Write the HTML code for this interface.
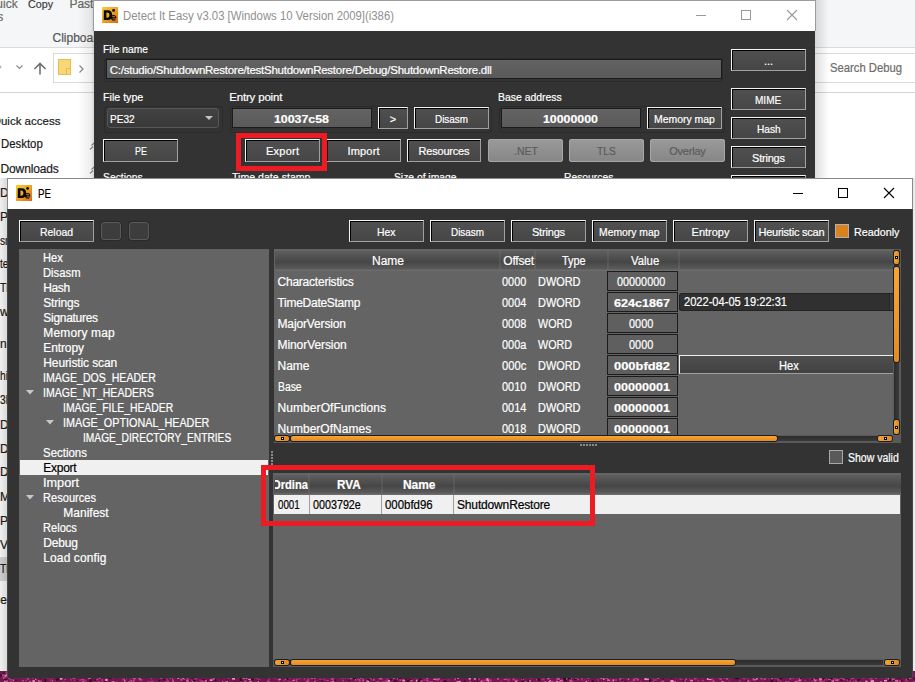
<!DOCTYPE html>
<html><head><meta charset="utf-8"><style>
html,body{margin:0;padding:0;width:915px;height:682px;overflow:hidden;background:#fff;}
body{position:relative;font-family:"Liberation Sans",sans-serif;}
body div{position:absolute;}
.t{white-space:nowrap;-webkit-text-stroke:0.2px;}
.btn{border-top:1px solid #f4f4f4;border-left:1px solid #f4f4f4;border-right:1px solid #a0a0a0;border-bottom:1px solid #a0a0a0;background:linear-gradient(#505050,#464646);box-shadow:inset 1px 1px 0 #000;}
.sbtn{background:linear-gradient(90deg,#f4a232,#e08a22);border-radius:2px;box-shadow:0 0 0 1px #1a1f26;}
.sbh{background:linear-gradient(#f7a535,#e38b20);border-radius:2px;box-shadow:0 0 0 1px #1a1f26;}
</style></head><body>
<div style="left:0px;top:0px;width:915px;height:47px;background:#f5f6f7;"></div>
<div style="left:0px;top:47px;width:915px;height:1px;background:#dadbdc;"></div>
<div style="left:0px;top:92px;width:915px;height:1px;background:#d5d5d5;"></div>
<div style="left:53px;top:53px;width:60px;height:30px;border:1px solid #d9d9d9;box-sizing:border-box;background:#fff;"></div>
<div style="left:810px;top:53px;width:120px;height:30px;border:1px solid #d9d9d9;box-sizing:border-box;background:#fff;"></div>
<div class="t" style="left:-13.00px;top:-4.16px;font-size:12px;line-height:16px;color:#6b6b6b;">Quick</div>
<div class="t" style="left:28.00px;top:-3.98px;font-size:11.5px;line-height:16px;color:#3a3a3a;transform:scaleX(0.9313);transform-origin:0 0;">Copy</div>
<div class="t" style="left:69.40px;top:-4.16px;font-size:12px;line-height:16px;color:#666;">Paste</div>
<div class="t" style="left:-34.00px;top:9.34px;font-size:12px;line-height:16px;color:#6b6b6b;">access</div>
<div class="t" style="left:52.50px;top:29.54px;font-size:12px;line-height:16px;color:#555;">Clipboard</div>
<svg style="position:absolute;left:0;top:55px" width="93" height="30"><path d="M-3 8 L1 12 L-3 16" stroke="#b0b0b0" stroke-width="1.2" fill="none"/><path d="M16.5 10.5 L19.5 13.5 L22.5 10.5" stroke="#8a8a8a" stroke-width="1.2" fill="none"/><path d="M40 19.5 V8.5 M34.5 14 L40 8.5 L45.5 14" stroke="#707070" stroke-width="1.6" fill="none"/><rect x="58.5" y="4.5" width="12" height="15" fill="#f8d876" stroke="#e6bc55" stroke-width="1"/><rect x="66.5" y="13.5" width="4" height="6" fill="#f8d876" stroke="#e6bc55" stroke-width="1"/><path d="M79.5 10.5 L83 14 L79.5 17.5" stroke="#8a8a8a" stroke-width="1.2" fill="none"/></svg>
<div class="t" style="left:830.30px;top:59.54px;font-size:12px;line-height:16px;color:#6d6d6d;transform:scaleX(0.9386);transform-origin:0 0;">Search Debug</div>
<div class="t" style="left:-8.00px;top:112.62px;font-size:11.5px;line-height:16px;color:#1a1a1a;">Quick access</div>
<div class="t" style="left:0.60px;top:136.24px;font-size:12px;line-height:16px;color:#1a1a1a;transform:scaleX(0.9473);transform-origin:0 0;">Desktop</div>
<div class="t" style="left:0.60px;top:160.54px;font-size:12px;line-height:16px;color:#1a1a1a;letter-spacing:-0.158px;">Downloads</div>
<svg style="position:absolute;left:86px;top:140px" width="8" height="40"><path d="M4 9.5 L7 6.5 M5.5 5.5 L8 3 L9 7" stroke="#8a9099" stroke-width="1.1" fill="none"/><path d="M4 33.5 L7 30.5 M5.5 29.5 L8 27 L9 31" stroke="#8a9099" stroke-width="1.1" fill="none"/></svg>
<div style="left:0px;top:557px;width:7px;height:24px;background:#d9d9d9;"></div>
<div class="t" style="left:0.00px;top:185.44px;font-size:12px;line-height:16px;color:#1a1a1a;">D</div>
<div class="t" style="left:0.00px;top:209.14px;font-size:12px;line-height:16px;color:#1a1a1a;">P</div>
<div class="t" style="left:0.00px;top:232.64px;font-size:12px;line-height:16px;color:#1a1a1a;transform:scaleX(.85);transform-origin:0 0;">sr</div>
<div class="t" style="left:0.00px;top:255.74px;font-size:12px;line-height:16px;color:#1a1a1a;transform:scaleX(.85);transform-origin:0 0;">te</div>
<div class="t" style="left:0.00px;top:279.84px;font-size:12px;line-height:16px;color:#1a1a1a;transform:scaleX(.85);transform-origin:0 0;">Tl</div>
<div class="t" style="left:0.00px;top:304.14px;font-size:12px;line-height:16px;color:#1a1a1a;">w</div>
<div class="t" style="left:0.00px;top:336.44px;font-size:12px;line-height:16px;color:#1a1a1a;">n</div>
<div class="t" style="left:0.00px;top:368.24px;font-size:12px;line-height:16px;color:#1a1a1a;transform:scaleX(.85);transform-origin:0 0;">hi</div>
<div class="t" style="left:0.00px;top:392.44px;font-size:12px;line-height:16px;color:#1a1a1a;transform:scaleX(.85);transform-origin:0 0;">3l</div>
<div class="t" style="left:0.00px;top:416.64px;font-size:12px;line-height:16px;color:#1a1a1a;">D</div>
<div class="t" style="left:0.00px;top:440.84px;font-size:12px;line-height:16px;color:#1a1a1a;">D</div>
<div class="t" style="left:0.00px;top:464.34px;font-size:12px;line-height:16px;color:#1a1a1a;">D</div>
<div class="t" style="left:0.00px;top:488.54px;font-size:12px;line-height:16px;color:#1a1a1a;">M</div>
<div class="t" style="left:0.00px;top:512.64px;font-size:12px;line-height:16px;color:#1a1a1a;">P</div>
<div class="t" style="left:0.00px;top:536.84px;font-size:12px;line-height:16px;color:#1a1a1a;">V</div>
<div class="t" style="left:0.00px;top:561.04px;font-size:12px;line-height:16px;color:#1a1a1a;transform:scaleX(.85);transform-origin:0 0;">Tl</div>
<div class="t" style="left:-2.50px;top:592.44px;font-size:12px;line-height:16px;color:#1a1a1a;"><span style="color:#1a6fd0">l</span>e</div>
<div style="left:815px;top:0px;width:14px;height:200px;background:linear-gradient(90deg,rgba(0,0,0,.13),rgba(0,0,0,0));"></div>
<div style="left:78px;top:0px;width:16px;height:200px;background:linear-gradient(90deg,rgba(0,0,0,0),rgba(0,0,0,.07) 80%,rgba(0,0,0,.16));"></div>
<div style="left:0px;top:178px;width:7px;height:493px;background:linear-gradient(90deg,rgba(0,0,0,.06),rgba(0,0,0,.15));"></div>
<div style="left:912px;top:178px;width:3px;height:493px;background:linear-gradient(90deg,rgba(0,0,0,.14),rgba(0,0,0,.05));"></div>
<svg style="position:absolute;left:0;top:671px" width="915" height="11"><rect width="915" height="11" fill="#6e1a4e"/><rect x="296.3" y="0.8" width="1" height="1" fill="#30101f"/><rect x="86.1" y="6.0" width="3" height="1" fill="#c8408f"/><rect x="78.6" y="4.0" width="1.5" height="1" fill="#30101f"/><rect x="388.4" y="8.9" width="1" height="1" fill="#c8408f"/><rect x="528.0" y="3.8" width="1.5" height="1" fill="#30101f"/><rect x="785.5" y="2.5" width="1.5" height="2" fill="#e060b0"/><rect x="522.4" y="5.7" width="1.5" height="1" fill="#a02a70"/><rect x="340.7" y="5.6" width="1" height="2" fill="#c8408f"/><rect x="566.4" y="5.0" width="3" height="1.5" fill="#f090c8"/><rect x="426.0" y="10.1" width="2" height="1.5" fill="#a02a70"/><rect x="726.9" y="7.4" width="1.5" height="1" fill="#7a1a55"/><rect x="480.6" y="9.5" width="2.5" height="1.5" fill="#e060b0"/><rect x="108.0" y="4.0" width="2" height="1" fill="#1a0612"/><rect x="385.9" y="10.5" width="1" height="2" fill="#f090c8"/><rect x="311.2" y="3.2" width="2.5" height="2" fill="#1a0612"/><rect x="62.9" y="0.1" width="2" height="1.5" fill="#e060b0"/><rect x="55.5" y="7.4" width="3" height="2" fill="#1a0612"/><rect x="260.4" y="3.6" width="2" height="1" fill="#1a0612"/><rect x="325.2" y="6.3" width="2.5" height="1" fill="#a02a70"/><rect x="702.9" y="0.6" width="1.5" height="1.5" fill="#d04a98"/><rect x="838.9" y="5.0" width="1.5" height="1.5" fill="#d04a98"/><rect x="502.7" y="9.6" width="2.5" height="2" fill="#7a1a55"/><rect x="646.4" y="10.8" width="2.5" height="1" fill="#b03078"/><rect x="75.9" y="0.8" width="1.5" height="1" fill="#1a0612"/><rect x="760.5" y="1.2" width="2" height="1" fill="#b03078"/><rect x="383.3" y="3.4" width="3" height="1.5" fill="#b03078"/><rect x="631.8" y="5.2" width="3" height="2" fill="#c8408f"/><rect x="417.8" y="9.5" width="3" height="1.5" fill="#d04a98"/><rect x="365.1" y="0.2" width="2.5" height="1" fill="#a02a70"/><rect x="61.6" y="1.5" width="1.5" height="1" fill="#f090c8"/><rect x="549.7" y="0.2" width="3" height="1" fill="#30101f"/><rect x="92.8" y="3.4" width="1" height="1" fill="#a02a70"/><rect x="561.9" y="0.8" width="2" height="1.5" fill="#f090c8"/><rect x="433.8" y="0.4" width="2.5" height="1.5" fill="#1a0612"/><rect x="442.7" y="0.0" width="1" height="2" fill="#f090c8"/><rect x="677.4" y="4.7" width="1.5" height="2" fill="#c8408f"/><rect x="187.8" y="10.4" width="2" height="1" fill="#30101f"/><rect x="836.4" y="8.1" width="2" height="2" fill="#e060b0"/><rect x="637.0" y="2.1" width="2" height="1" fill="#f090c8"/><rect x="706.3" y="5.4" width="3" height="1.5" fill="#a02a70"/><rect x="561.1" y="8.5" width="1.5" height="1" fill="#d04a98"/><rect x="677.0" y="1.7" width="3" height="1.5" fill="#f090c8"/><rect x="668.9" y="10.9" width="2" height="1.5" fill="#7a1a55"/><rect x="177.2" y="6.3" width="2" height="1.5" fill="#f090c8"/><rect x="873.8" y="3.4" width="1.5" height="1" fill="#a02a70"/><rect x="430.1" y="3.1" width="2.5" height="2" fill="#c8408f"/><rect x="438.7" y="6.8" width="1" height="2" fill="#e060b0"/><rect x="832.4" y="8.4" width="1.5" height="1.5" fill="#b03078"/><rect x="397.0" y="6.6" width="1" height="2" fill="#d04a98"/><rect x="423.8" y="7.9" width="1" height="2" fill="#b03078"/><rect x="155.6" y="0.5" width="1.5" height="2" fill="#1a0612"/><rect x="737.9" y="0.8" width="3" height="1.5" fill="#f090c8"/><rect x="142.7" y="5.6" width="1" height="1" fill="#e060b0"/><rect x="481.8" y="10.2" width="2.5" height="1" fill="#a02a70"/><rect x="25.6" y="1.6" width="3" height="1" fill="#f090c8"/><rect x="237.3" y="4.0" width="1.5" height="1" fill="#f090c8"/><rect x="821.4" y="6.9" width="3" height="1.5" fill="#30101f"/><rect x="119.6" y="0.8" width="3" height="1" fill="#1a0612"/><rect x="710.5" y="6.3" width="1.5" height="1" fill="#b03078"/><rect x="433.2" y="7.7" width="3" height="1" fill="#f090c8"/><rect x="624.3" y="5.4" width="2.5" height="1" fill="#30101f"/><rect x="52.0" y="1.3" width="1" height="1" fill="#30101f"/><rect x="413.7" y="-0.7" width="1" height="1.5" fill="#f090c8"/><rect x="560.5" y="5.1" width="3" height="1" fill="#7a1a55"/><rect x="413.9" y="5.4" width="2.5" height="2" fill="#a02a70"/><rect x="639.8" y="9.5" width="2" height="2" fill="#a02a70"/><rect x="768.6" y="0.6" width="1" height="1.5" fill="#1a0612"/><rect x="289.1" y="7.1" width="2.5" height="1" fill="#a02a70"/><rect x="612.6" y="8.4" width="1.5" height="2" fill="#f090c8"/><rect x="130.8" y="9.6" width="2.5" height="1" fill="#e060b0"/><rect x="364.4" y="4.8" width="1.5" height="1" fill="#d04a98"/><rect x="909.6" y="3.8" width="2.5" height="1" fill="#f090c8"/><rect x="291.5" y="7.7" width="1" height="1.5" fill="#30101f"/><rect x="419.7" y="7.4" width="2.5" height="1.5" fill="#30101f"/><rect x="570.9" y="5.1" width="1" height="1" fill="#a02a70"/><rect x="889.1" y="0.3" width="2" height="1.5" fill="#c8408f"/><rect x="828.9" y="1.2" width="1.5" height="1.5" fill="#7a1a55"/><rect x="371.4" y="5.4" width="3" height="2" fill="#1a0612"/><rect x="640.9" y="0.1" width="1" height="2" fill="#b03078"/><rect x="389.2" y="-0.1" width="1" height="2" fill="#e060b0"/><rect x="733.5" y="0.0" width="1.5" height="1" fill="#7a1a55"/><rect x="789.4" y="4.4" width="2" height="2" fill="#d04a98"/><rect x="847.9" y="2.2" width="1.5" height="1" fill="#30101f"/><rect x="649.2" y="10.3" width="1.5" height="1.5" fill="#c8408f"/><rect x="165.7" y="10.2" width="2" height="2" fill="#a02a70"/><rect x="265.3" y="5.0" width="1.5" height="1.5" fill="#f090c8"/><rect x="735.4" y="10.9" width="1" height="1" fill="#c8408f"/><rect x="670.8" y="5.6" width="1.5" height="2" fill="#1a0612"/><rect x="224.8" y="4.4" width="2.5" height="2" fill="#1a0612"/><rect x="499.5" y="9.7" width="3" height="1.5" fill="#a02a70"/><rect x="898.9" y="3.1" width="1.5" height="1.5" fill="#f090c8"/><rect x="898.4" y="9.0" width="1" height="1" fill="#7a1a55"/><rect x="394.1" y="-0.3" width="2.5" height="2" fill="#7a1a55"/><rect x="547.9" y="7.3" width="1" height="1.5" fill="#b03078"/><rect x="144.1" y="4.3" width="2" height="1.5" fill="#f090c8"/><rect x="890.0" y="5.6" width="1.5" height="1" fill="#7a1a55"/><rect x="199.3" y="1.2" width="2" height="1.5" fill="#e060b0"/><rect x="434.3" y="5.0" width="1.5" height="1" fill="#30101f"/><rect x="710.3" y="0.1" width="1" height="1" fill="#d04a98"/><rect x="536.9" y="3.7" width="2" height="1.5" fill="#a02a70"/><rect x="77.3" y="10.5" width="1.5" height="2" fill="#d04a98"/><rect x="699.3" y="7.6" width="2.5" height="1" fill="#7a1a55"/><rect x="662.6" y="6.7" width="1" height="2" fill="#30101f"/><rect x="574.0" y="7.8" width="3" height="1" fill="#30101f"/><rect x="688.9" y="5.8" width="1" height="2" fill="#a02a70"/><rect x="77.9" y="-0.5" width="2" height="1" fill="#d04a98"/><rect x="764.8" y="5.7" width="1" height="2" fill="#30101f"/><rect x="622.8" y="4.9" width="1" height="1.5" fill="#e060b0"/><rect x="684.7" y="5.0" width="3" height="1" fill="#30101f"/><rect x="60.4" y="7.8" width="2" height="1" fill="#7a1a55"/><rect x="214.8" y="8.1" width="1.5" height="2" fill="#1a0612"/><rect x="452.0" y="3.6" width="2.5" height="2" fill="#7a1a55"/><rect x="701.8" y="6.4" width="1.5" height="1" fill="#b03078"/><rect x="303.6" y="6.8" width="2" height="2" fill="#b03078"/><rect x="11.4" y="-0.3" width="2" height="2" fill="#e060b0"/><rect x="633.3" y="7.1" width="2" height="2" fill="#30101f"/><rect x="261.3" y="4.6" width="1" height="2" fill="#a02a70"/><rect x="285.2" y="0.0" width="2.5" height="1" fill="#7a1a55"/><rect x="420.0" y="8.8" width="2.5" height="1.5" fill="#d04a98"/><rect x="192.0" y="10.3" width="1.5" height="1" fill="#e060b0"/><rect x="129.7" y="5.3" width="2" height="1" fill="#30101f"/><rect x="255.8" y="0.4" width="2" height="1" fill="#1a0612"/><rect x="821.4" y="4.8" width="1" height="1" fill="#c8408f"/><rect x="869.2" y="7.2" width="2.5" height="1.5" fill="#b03078"/><rect x="380.8" y="3.5" width="1" height="1.5" fill="#c8408f"/><rect x="297.0" y="3.1" width="2.5" height="1" fill="#a02a70"/><rect x="652.4" y="9.8" width="2" height="1.5" fill="#f090c8"/><rect x="59.5" y="3.7" width="3" height="1" fill="#f090c8"/><rect x="846.8" y="8.1" width="1" height="1.5" fill="#e060b0"/><rect x="47.2" y="6.9" width="1.5" height="1" fill="#7a1a55"/><rect x="399.2" y="2.8" width="2" height="1.5" fill="#c8408f"/><rect x="742.9" y="6.6" width="3" height="2" fill="#a02a70"/><rect x="658.4" y="-0.4" width="2.5" height="1.5" fill="#b03078"/><rect x="589.7" y="2.4" width="1" height="2" fill="#b03078"/><rect x="156.2" y="4.0" width="2" height="1.5" fill="#7a1a55"/><rect x="676.2" y="10.7" width="2" height="1.5" fill="#a02a70"/><rect x="275.3" y="5.7" width="2.5" height="1" fill="#b03078"/><rect x="588.5" y="-0.1" width="3" height="1.5" fill="#30101f"/><rect x="201.3" y="9.9" width="2.5" height="1.5" fill="#b03078"/><rect x="501.2" y="1.9" width="1.5" height="1.5" fill="#30101f"/><rect x="83.4" y="1.9" width="2" height="2" fill="#a02a70"/><rect x="811.8" y="8.0" width="2.5" height="1.5" fill="#d04a98"/><rect x="682.4" y="1.5" width="2" height="1.5" fill="#c8408f"/><rect x="455.8" y="5.9" width="2" height="1" fill="#30101f"/><rect x="484.2" y="8.5" width="1.5" height="1" fill="#7a1a55"/><rect x="820.6" y="3.6" width="2.5" height="1.5" fill="#7a1a55"/><rect x="776.5" y="9.5" width="1" height="1" fill="#c8408f"/><rect x="389.1" y="8.2" width="2.5" height="2" fill="#1a0612"/><rect x="0.2" y="3.7" width="3" height="1.5" fill="#1a0612"/><rect x="227.3" y="0.3" width="1.5" height="1" fill="#30101f"/><rect x="889.3" y="0.3" width="2.5" height="1" fill="#30101f"/><rect x="710.8" y="-1.0" width="1.5" height="1" fill="#c8408f"/><rect x="590.6" y="2.6" width="1.5" height="2" fill="#7a1a55"/><rect x="483.4" y="4.2" width="1" height="1" fill="#e060b0"/><rect x="274.8" y="10.3" width="1.5" height="1.5" fill="#7a1a55"/><rect x="204.6" y="6.2" width="1" height="2" fill="#7a1a55"/><rect x="911.7" y="2.3" width="2" height="2" fill="#a02a70"/><rect x="434.9" y="1.8" width="1.5" height="1" fill="#d04a98"/><rect x="644.8" y="2.7" width="1" height="1" fill="#1a0612"/><rect x="809.6" y="6.8" width="1" height="1.5" fill="#a02a70"/><rect x="610.6" y="10.1" width="1.5" height="1.5" fill="#c8408f"/><rect x="636.7" y="7.6" width="2" height="2" fill="#d04a98"/><rect x="181.2" y="8.6" width="3" height="1" fill="#a02a70"/><rect x="453.6" y="1.4" width="1.5" height="1" fill="#1a0612"/><rect x="202.6" y="8.1" width="2" height="1" fill="#1a0612"/><rect x="558.2" y="9.8" width="2.5" height="1.5" fill="#c8408f"/><rect x="868.1" y="0.8" width="2.5" height="1" fill="#a02a70"/><rect x="21.6" y="6.2" width="2.5" height="1" fill="#c8408f"/><rect x="168.5" y="4.4" width="2" height="2" fill="#e060b0"/><rect x="912.7" y="10.2" width="2" height="1" fill="#b03078"/><rect x="597.0" y="5.3" width="2.5" height="1" fill="#7a1a55"/><rect x="608.0" y="3.5" width="2" height="1.5" fill="#1a0612"/><rect x="154.9" y="-1.0" width="2" height="1" fill="#f090c8"/><rect x="384.5" y="9.6" width="3" height="1" fill="#d04a98"/><rect x="326.3" y="8.9" width="2.5" height="1" fill="#c8408f"/><rect x="645.3" y="1.3" width="3" height="1.5" fill="#a02a70"/><rect x="295.8" y="7.8" width="2.5" height="1" fill="#d04a98"/><rect x="226.9" y="6.5" width="2.5" height="1" fill="#d04a98"/><rect x="31.9" y="-0.2" width="1" height="1.5" fill="#a02a70"/><rect x="683.8" y="9.8" width="2" height="1.5" fill="#7a1a55"/><rect x="306.5" y="10.4" width="1" height="1.5" fill="#f090c8"/><rect x="845.7" y="2.6" width="3" height="2" fill="#e060b0"/><rect x="22.2" y="1.8" width="2.5" height="2" fill="#1a0612"/><rect x="872.8" y="3.6" width="2" height="1.5" fill="#1a0612"/><rect x="121.4" y="5.0" width="1" height="2" fill="#7a1a55"/><rect x="752.8" y="8.3" width="3" height="1" fill="#f090c8"/><rect x="788.0" y="4.5" width="3" height="1" fill="#30101f"/><rect x="180.5" y="8.0" width="1.5" height="1.5" fill="#e060b0"/><rect x="594.3" y="4.8" width="3" height="1.5" fill="#b03078"/><rect x="896.9" y="9.6" width="1" height="1.5" fill="#e060b0"/><rect x="190.6" y="4.1" width="2.5" height="1" fill="#a02a70"/><rect x="121.6" y="4.5" width="1.5" height="2" fill="#30101f"/><rect x="775.0" y="7.0" width="1" height="1.5" fill="#7a1a55"/><rect x="255.6" y="2.2" width="2" height="2" fill="#7a1a55"/><rect x="182.3" y="2.0" width="1.5" height="1" fill="#b03078"/><rect x="257.4" y="9.9" width="1.5" height="1.5" fill="#e060b0"/><rect x="362.4" y="10.9" width="3" height="2" fill="#a02a70"/><rect x="594.4" y="0.2" width="2.5" height="1" fill="#e060b0"/><rect x="4.1" y="9.6" width="1.5" height="1.5" fill="#f090c8"/><rect x="36.9" y="2.5" width="1" height="1" fill="#a02a70"/><rect x="549.5" y="8.9" width="1.5" height="1" fill="#f090c8"/><rect x="469.1" y="1.1" width="3" height="1.5" fill="#c8408f"/><rect x="96.8" y="6.2" width="3" height="1.5" fill="#a02a70"/><rect x="34.3" y="3.1" width="1" height="1" fill="#7a1a55"/><rect x="35.0" y="7.8" width="1.5" height="1" fill="#f090c8"/><rect x="374.2" y="3.5" width="3" height="1.5" fill="#e060b0"/><rect x="186.1" y="8.5" width="3" height="1.5" fill="#e060b0"/><rect x="373.5" y="8.6" width="3" height="1" fill="#30101f"/><rect x="83.4" y="1.0" width="2" height="1.5" fill="#7a1a55"/><rect x="611.0" y="4.0" width="1" height="1.5" fill="#f090c8"/><rect x="378.9" y="-0.8" width="2" height="2" fill="#a02a70"/><rect x="357.5" y="3.9" width="1" height="1.5" fill="#b03078"/><rect x="387.7" y="8.8" width="2.5" height="2" fill="#f090c8"/><rect x="421.7" y="1.0" width="1" height="1" fill="#30101f"/><rect x="130.4" y="8.7" width="2.5" height="1" fill="#f090c8"/><rect x="674.6" y="1.1" width="2" height="1.5" fill="#b03078"/><rect x="476.9" y="10.1" width="1" height="1.5" fill="#1a0612"/><rect x="689.5" y="8.5" width="1.5" height="1.5" fill="#b03078"/><rect x="766.1" y="-0.5" width="2.5" height="1.5" fill="#c8408f"/><rect x="556.0" y="6.6" width="1" height="2" fill="#b03078"/><rect x="585.9" y="9.3" width="3" height="1.5" fill="#a02a70"/><rect x="758.7" y="1.2" width="1.5" height="1" fill="#d04a98"/><rect x="858.8" y="0.9" width="2" height="1" fill="#b03078"/><rect x="226.1" y="7.7" width="1.5" height="1" fill="#30101f"/><rect x="770.9" y="7.1" width="2" height="1" fill="#d04a98"/><rect x="548.6" y="5.6" width="2" height="2" fill="#d04a98"/><rect x="282.0" y="2.0" width="2.5" height="2" fill="#f090c8"/><rect x="408.8" y="4.3" width="1" height="1" fill="#1a0612"/><rect x="425.7" y="4.4" width="3" height="1.5" fill="#b03078"/><rect x="741.6" y="3.8" width="1" height="1" fill="#f090c8"/><rect x="394.0" y="0.1" width="2.5" height="2" fill="#30101f"/><rect x="601.2" y="-0.5" width="1.5" height="1" fill="#f090c8"/><rect x="711.5" y="5.1" width="1" height="2" fill="#d04a98"/><rect x="597.3" y="8.4" width="1" height="1" fill="#e060b0"/><rect x="177.2" y="10.8" width="2.5" height="1.5" fill="#b03078"/><rect x="627.8" y="7.7" width="1.5" height="1" fill="#f090c8"/><rect x="558.6" y="2.0" width="2" height="2" fill="#7a1a55"/><rect x="828.1" y="4.5" width="2" height="2" fill="#1a0612"/><rect x="190.6" y="2.2" width="3" height="1" fill="#f090c8"/><rect x="340.6" y="1.4" width="2.5" height="1" fill="#7a1a55"/><rect x="621.9" y="9.7" width="1.5" height="1.5" fill="#e060b0"/><rect x="703.0" y="-0.4" width="2" height="1.5" fill="#30101f"/><rect x="477.1" y="7.3" width="1" height="1.5" fill="#30101f"/><rect x="576.2" y="3.7" width="2" height="1.5" fill="#d04a98"/><rect x="906.3" y="5.9" width="2" height="1.5" fill="#e060b0"/><rect x="404.7" y="1.1" width="1" height="1.5" fill="#30101f"/><rect x="232.1" y="6.7" width="3" height="2" fill="#f090c8"/><rect x="670.7" y="8.0" width="1.5" height="1" fill="#7a1a55"/><rect x="563.7" y="4.2" width="3" height="1.5" fill="#c8408f"/><rect x="120.8" y="1.7" width="1" height="1" fill="#c8408f"/><rect x="2.4" y="3.3" width="1" height="2" fill="#f090c8"/><rect x="488.7" y="4.0" width="2" height="2" fill="#b03078"/><rect x="186.8" y="6.5" width="2.5" height="1" fill="#b03078"/><rect x="12.9" y="8.6" width="1.5" height="1.5" fill="#e060b0"/><rect x="58.3" y="0.7" width="2" height="1.5" fill="#7a1a55"/><rect x="884.9" y="-0.3" width="3" height="1.5" fill="#1a0612"/><rect x="550.7" y="5.2" width="2.5" height="1" fill="#b03078"/><rect x="826.7" y="-0.5" width="3" height="1" fill="#d04a98"/><rect x="169.9" y="0.9" width="1" height="1" fill="#30101f"/><rect x="601.0" y="1.4" width="2.5" height="1" fill="#30101f"/><rect x="556.4" y="5.1" width="2.5" height="2" fill="#b03078"/><rect x="465.3" y="-0.2" width="1" height="2" fill="#1a0612"/><rect x="654.6" y="-0.9" width="2.5" height="2" fill="#1a0612"/><rect x="73.6" y="6.9" width="1.5" height="1" fill="#e060b0"/><rect x="239.2" y="6.7" width="1" height="1.5" fill="#7a1a55"/><rect x="651.2" y="2.2" width="3" height="2" fill="#d04a98"/><rect x="627.4" y="10.0" width="2" height="1.5" fill="#a02a70"/><rect x="78.2" y="5.1" width="1.5" height="1.5" fill="#a02a70"/><rect x="770.2" y="1.4" width="1.5" height="2" fill="#f090c8"/><rect x="175.6" y="3.7" width="3" height="1" fill="#d04a98"/><rect x="830.4" y="6.6" width="3" height="1.5" fill="#1a0612"/><rect x="768.3" y="7.4" width="1" height="1.5" fill="#a02a70"/><rect x="521.9" y="2.7" width="1.5" height="1.5" fill="#e060b0"/><rect x="517.2" y="1.1" width="1" height="1" fill="#e060b0"/><rect x="97.6" y="10.1" width="2" height="1" fill="#c8408f"/><rect x="28.2" y="0.7" width="1" height="2" fill="#e060b0"/><rect x="674.2" y="-0.2" width="3" height="1.5" fill="#a02a70"/><rect x="748.1" y="8.8" width="1" height="2" fill="#d04a98"/><rect x="98.0" y="1.5" width="1" height="1" fill="#c8408f"/><rect x="868.6" y="9.9" width="1" height="2" fill="#7a1a55"/><rect x="436.6" y="0.6" width="1.5" height="1.5" fill="#f090c8"/><rect x="307.9" y="2.1" width="2" height="1.5" fill="#7a1a55"/><rect x="44.3" y="8.1" width="2" height="2" fill="#30101f"/><rect x="435.6" y="2.5" width="1" height="1.5" fill="#c8408f"/><rect x="399.4" y="8.3" width="2" height="1.5" fill="#c8408f"/><rect x="492.2" y="1.6" width="1" height="2" fill="#7a1a55"/><rect x="155.9" y="-1.0" width="1.5" height="1.5" fill="#c8408f"/><rect x="4.0" y="4.9" width="2.5" height="2" fill="#b03078"/><rect x="884.9" y="6.1" width="3" height="1.5" fill="#b03078"/><rect x="259.6" y="1.6" width="1.5" height="1.5" fill="#b03078"/><rect x="100.6" y="6.6" width="1" height="1.5" fill="#30101f"/><rect x="720.0" y="6.5" width="2" height="1" fill="#d04a98"/><rect x="849.6" y="9.7" width="1" height="1.5" fill="#c8408f"/><rect x="340.3" y="2.6" width="2.5" height="2" fill="#30101f"/><rect x="156.6" y="10.8" width="1.5" height="1.5" fill="#b03078"/><rect x="486.4" y="8.1" width="3" height="2" fill="#c8408f"/><rect x="318.9" y="2.9" width="1.5" height="1.5" fill="#30101f"/><rect x="678.9" y="1.0" width="2.5" height="2" fill="#7a1a55"/><rect x="529.9" y="0.5" width="2.5" height="2" fill="#a02a70"/><rect x="464.5" y="2.2" width="3" height="1" fill="#b03078"/><rect x="891.9" y="7.7" width="3" height="2" fill="#f090c8"/><rect x="147.2" y="2.9" width="1.5" height="1.5" fill="#e060b0"/><rect x="150.6" y="6.9" width="1.5" height="1.5" fill="#b03078"/><rect x="900.2" y="8.5" width="2" height="1.5" fill="#7a1a55"/><rect x="179.5" y="6.7" width="1" height="1.5" fill="#a02a70"/><rect x="810.0" y="4.6" width="1" height="1.5" fill="#d04a98"/><rect x="634.5" y="5.0" width="2" height="1.5" fill="#c8408f"/><rect x="129.8" y="6.2" width="2.5" height="1" fill="#a02a70"/><rect x="830.8" y="4.2" width="3" height="2" fill="#d04a98"/><rect x="774.1" y="7.0" width="3" height="1" fill="#b03078"/><rect x="587.0" y="4.4" width="2" height="1.5" fill="#e060b0"/><rect x="818.7" y="1.9" width="2.5" height="2" fill="#b03078"/><rect x="228.8" y="4.1" width="2.5" height="1" fill="#d04a98"/><rect x="474.2" y="6.9" width="1.5" height="2" fill="#f090c8"/><rect x="712.0" y="3.7" width="2.5" height="1" fill="#c8408f"/><rect x="229.9" y="1.6" width="1.5" height="2" fill="#f090c8"/><rect x="92.5" y="5.9" width="3" height="1" fill="#1a0612"/><rect x="468.7" y="6.7" width="2" height="2" fill="#f090c8"/><rect x="375.5" y="10.4" width="1.5" height="2" fill="#b03078"/><rect x="359.1" y="8.2" width="1" height="2" fill="#f090c8"/><rect x="583.4" y="2.0" width="2.5" height="1.5" fill="#c8408f"/><rect x="12.2" y="4.0" width="2.5" height="2" fill="#f090c8"/><rect x="530.9" y="0.3" width="2" height="2" fill="#d04a98"/><rect x="860.0" y="5.3" width="1.5" height="1.5" fill="#1a0612"/><rect x="194.0" y="0.6" width="1" height="2" fill="#a02a70"/><rect x="429.3" y="5.7" width="1.5" height="1" fill="#f090c8"/><rect x="609.4" y="9.0" width="2.5" height="1.5" fill="#7a1a55"/><rect x="695.3" y="6.8" width="2.5" height="1.5" fill="#a02a70"/><rect x="244.7" y="3.5" width="2" height="1.5" fill="#b03078"/><rect x="440.6" y="8.7" width="2" height="1.5" fill="#a02a70"/><rect x="598.8" y="2.8" width="2.5" height="1.5" fill="#e060b0"/><rect x="603.2" y="3.3" width="2" height="1.5" fill="#c8408f"/><rect x="78.0" y="5.8" width="2" height="1" fill="#30101f"/><rect x="760.7" y="6.6" width="1" height="2" fill="#c8408f"/><rect x="191.9" y="-0.1" width="2" height="1.5" fill="#e060b0"/><rect x="529.3" y="9.3" width="1.5" height="1.5" fill="#f090c8"/><rect x="718.2" y="1.5" width="2.5" height="2" fill="#b03078"/><rect x="557.7" y="7.3" width="1" height="2" fill="#30101f"/><rect x="721.1" y="9.1" width="1.5" height="1.5" fill="#a02a70"/><rect x="485.7" y="7.9" width="2.5" height="2" fill="#e060b0"/><rect x="507.9" y="2.2" width="1.5" height="1" fill="#1a0612"/><rect x="451.2" y="-0.3" width="2.5" height="1" fill="#1a0612"/><rect x="225.6" y="1.0" width="3" height="2" fill="#c8408f"/><rect x="146.7" y="2.8" width="3" height="1.5" fill="#7a1a55"/><rect x="769.1" y="3.5" width="2.5" height="2" fill="#e060b0"/><rect x="165.2" y="3.3" width="1" height="1" fill="#c8408f"/><rect x="624.6" y="10.2" width="2" height="1" fill="#30101f"/><rect x="443.0" y="8.1" width="1.5" height="1" fill="#a02a70"/><rect x="657.1" y="6.5" width="2" height="1" fill="#f090c8"/><rect x="312.3" y="8.3" width="3" height="1" fill="#7a1a55"/><rect x="398.2" y="4.1" width="3" height="1" fill="#7a1a55"/><rect x="268.0" y="8.9" width="2.5" height="1.5" fill="#30101f"/><rect x="900.6" y="9.5" width="2" height="1" fill="#1a0612"/><rect x="724.6" y="3.0" width="2" height="2" fill="#7a1a55"/><rect x="116.7" y="10.7" width="1" height="1" fill="#d04a98"/><rect x="661.2" y="9.6" width="3" height="2" fill="#c8408f"/><rect x="364.6" y="0.3" width="1" height="1" fill="#1a0612"/><rect x="556.9" y="6.9" width="3" height="2" fill="#d04a98"/><rect x="564.3" y="6.5" width="3" height="2" fill="#e060b0"/><rect x="194.4" y="7.0" width="2.5" height="2" fill="#b03078"/><rect x="92.7" y="1.2" width="1" height="1.5" fill="#e060b0"/><rect x="836.4" y="6.9" width="2" height="1" fill="#7a1a55"/><rect x="514.3" y="2.1" width="2" height="1" fill="#d04a98"/><rect x="31.3" y="-0.8" width="3" height="2" fill="#c8408f"/><rect x="455.5" y="5.3" width="1" height="1.5" fill="#d04a98"/><rect x="408.5" y="-0.8" width="2.5" height="2" fill="#b03078"/><rect x="435.0" y="3.9" width="1" height="1" fill="#1a0612"/><rect x="194.2" y="0.8" width="1" height="1.5" fill="#c8408f"/><rect x="8.5" y="7.0" width="1" height="1" fill="#e060b0"/><rect x="118.0" y="-0.8" width="3" height="1" fill="#1a0612"/><rect x="671.2" y="1.2" width="1" height="1.5" fill="#b03078"/><rect x="667.7" y="0.0" width="3" height="2" fill="#1a0612"/><rect x="421.4" y="10.2" width="2" height="1" fill="#c8408f"/><rect x="10.4" y="-0.8" width="3" height="1" fill="#d04a98"/><rect x="284.6" y="7.8" width="1.5" height="1.5" fill="#c8408f"/><rect x="289.4" y="10.4" width="2.5" height="1.5" fill="#b03078"/><rect x="132.6" y="8.6" width="2" height="2" fill="#b03078"/><rect x="576.2" y="4.0" width="2.5" height="1.5" fill="#7a1a55"/><rect x="717.9" y="5.8" width="2" height="1.5" fill="#c8408f"/><rect x="569.0" y="6.8" width="3" height="1.5" fill="#c8408f"/><rect x="760.6" y="6.2" width="2" height="2" fill="#d04a98"/><rect x="893.4" y="2.0" width="2.5" height="2" fill="#d04a98"/><rect x="550.6" y="9.8" width="2.5" height="1.5" fill="#c8408f"/><rect x="294.2" y="2.2" width="1.5" height="2" fill="#c8408f"/><rect x="264.0" y="0.7" width="3" height="1" fill="#7a1a55"/><rect x="892.5" y="8.6" width="3" height="2" fill="#1a0612"/><rect x="317.4" y="0.0" width="3" height="1.5" fill="#d04a98"/><rect x="183.4" y="8.0" width="1.5" height="1.5" fill="#c8408f"/><rect x="620.1" y="4.6" width="1.5" height="1.5" fill="#c8408f"/><rect x="724.4" y="4.5" width="1" height="2" fill="#f090c8"/><rect x="706.5" y="1.8" width="3" height="2" fill="#7a1a55"/><rect x="809.9" y="5.3" width="2.5" height="2" fill="#a02a70"/><rect x="173.1" y="1.3" width="1.5" height="2" fill="#7a1a55"/><rect x="332.0" y="5.8" width="2.5" height="2" fill="#b03078"/><rect x="225.4" y="10.1" width="2.5" height="1.5" fill="#e060b0"/><rect x="340.1" y="4.6" width="1" height="1" fill="#f090c8"/><rect x="546.4" y="3.1" width="3" height="2" fill="#c8408f"/><rect x="86.1" y="1.5" width="3" height="1.5" fill="#a02a70"/><rect x="239.4" y="8.4" width="2.5" height="1" fill="#1a0612"/><rect x="702.0" y="8.8" width="1.5" height="1.5" fill="#c8408f"/><rect x="310.0" y="10.9" width="2.5" height="1" fill="#c8408f"/><rect x="46.7" y="5.7" width="2.5" height="1.5" fill="#e060b0"/><rect x="789.6" y="6.7" width="1" height="2" fill="#e060b0"/><rect x="235.3" y="5.8" width="1" height="2" fill="#30101f"/><rect x="359.7" y="4.4" width="1.5" height="1.5" fill="#a02a70"/><rect x="907.4" y="1.7" width="1" height="1.5" fill="#f090c8"/><rect x="54.2" y="5.6" width="1" height="1" fill="#7a1a55"/><rect x="719.5" y="7.5" width="2.5" height="1" fill="#e060b0"/><rect x="132.5" y="8.1" width="1.5" height="2" fill="#7a1a55"/><rect x="539.7" y="4.3" width="1" height="1.5" fill="#f090c8"/><rect x="340.1" y="3.7" width="2" height="1.5" fill="#d04a98"/><rect x="154.2" y="1.9" width="1.5" height="2" fill="#c8408f"/><rect x="428.1" y="10.0" width="1" height="1" fill="#a02a70"/><rect x="71.2" y="6.4" width="2" height="2" fill="#b03078"/><rect x="712.2" y="10.5" width="2.5" height="1" fill="#e060b0"/><rect x="413.9" y="3.1" width="1.5" height="1.5" fill="#e060b0"/><rect x="574.8" y="0.7" width="1.5" height="2" fill="#c8408f"/><rect x="164.9" y="4.4" width="1.5" height="1.5" fill="#b03078"/><rect x="243.8" y="3.9" width="1.5" height="1" fill="#7a1a55"/><rect x="522.5" y="2.6" width="1.5" height="1.5" fill="#1a0612"/><rect x="100.0" y="4.5" width="2.5" height="1" fill="#b03078"/><rect x="895.4" y="-0.3" width="1.5" height="2" fill="#1a0612"/><rect x="764.3" y="0.4" width="1.5" height="1.5" fill="#d04a98"/><rect x="906.8" y="11.0" width="1.5" height="1" fill="#d04a98"/><rect x="264.8" y="9.8" width="1" height="2" fill="#7a1a55"/><rect x="132.1" y="6.7" width="2.5" height="2" fill="#f090c8"/><rect x="467.4" y="4.3" width="3" height="1.5" fill="#b03078"/><rect x="329.5" y="-0.5" width="2.5" height="1" fill="#7a1a55"/><rect x="522.8" y="0.7" width="1.5" height="2" fill="#a02a70"/><rect x="651.1" y="1.4" width="1" height="1" fill="#1a0612"/><rect x="696.6" y="1.1" width="1.5" height="2" fill="#a02a70"/><rect x="533.4" y="1.4" width="1" height="2" fill="#30101f"/><rect x="373.4" y="7.7" width="1" height="2" fill="#f090c8"/><rect x="306.7" y="9.1" width="2.5" height="1" fill="#c8408f"/><rect x="374.7" y="8.2" width="1.5" height="2" fill="#7a1a55"/><rect x="227.2" y="5.8" width="2" height="1" fill="#b03078"/><rect x="642.6" y="5.9" width="1" height="1.5" fill="#30101f"/><rect x="852.9" y="10.6" width="1" height="1" fill="#f090c8"/><rect x="653.8" y="8.8" width="2" height="2" fill="#d04a98"/><rect x="527.3" y="9.8" width="2" height="1" fill="#1a0612"/><rect x="408.5" y="-0.7" width="3" height="1" fill="#c8408f"/><rect x="222.8" y="0.1" width="3" height="1" fill="#b03078"/><rect x="93.9" y="2.0" width="1" height="1" fill="#e060b0"/><rect x="847.6" y="7.9" width="2" height="1" fill="#1a0612"/><rect x="478.5" y="7.4" width="1" height="1.5" fill="#e060b0"/><rect x="656.1" y="-0.5" width="1" height="1.5" fill="#1a0612"/><rect x="536.1" y="8.1" width="1" height="1" fill="#e060b0"/><rect x="371.2" y="0.6" width="3" height="1" fill="#a02a70"/><rect x="134.7" y="5.9" width="2.5" height="1" fill="#c8408f"/><rect x="857.9" y="3.7" width="2.5" height="2" fill="#30101f"/><rect x="33.1" y="10.6" width="1" height="1.5" fill="#f090c8"/><rect x="366.6" y="9.1" width="2.5" height="2" fill="#f090c8"/><rect x="745.8" y="9.2" width="1" height="1.5" fill="#30101f"/><rect x="134.2" y="7.2" width="2" height="1" fill="#d04a98"/><rect x="606.8" y="-0.9" width="1" height="2" fill="#b03078"/><rect x="63.4" y="4.2" width="3" height="2" fill="#c8408f"/><rect x="206.3" y="4.0" width="2.5" height="1.5" fill="#c8408f"/><rect x="740.5" y="9.6" width="1" height="1" fill="#7a1a55"/><rect x="839.9" y="6.5" width="3" height="1" fill="#e060b0"/><rect x="229.3" y="5.2" width="2.5" height="1" fill="#c8408f"/><rect x="263.1" y="2.7" width="1.5" height="1" fill="#c8408f"/><rect x="543.8" y="10.5" width="3" height="1.5" fill="#e060b0"/><rect x="426.8" y="5.4" width="1.5" height="1.5" fill="#e060b0"/><rect x="468.1" y="9.6" width="2.5" height="2" fill="#7a1a55"/><rect x="250.8" y="7.8" width="3" height="1.5" fill="#1a0612"/><rect x="558.1" y="5.8" width="2.5" height="1" fill="#30101f"/><rect x="650.0" y="4.5" width="3" height="1.5" fill="#1a0612"/><rect x="429.1" y="2.7" width="1.5" height="1.5" fill="#a02a70"/><rect x="172.8" y="5.6" width="3" height="1.5" fill="#c8408f"/><rect x="845.6" y="0.9" width="1.5" height="1.5" fill="#30101f"/><rect x="297.8" y="2.2" width="1.5" height="1.5" fill="#c8408f"/><rect x="706.5" y="0.9" width="1" height="2" fill="#f090c8"/><rect x="402.6" y="-0.3" width="2.5" height="1.5" fill="#f090c8"/><rect x="672.9" y="0.3" width="1.5" height="2" fill="#b03078"/><rect x="381.3" y="7.0" width="1.5" height="2" fill="#a02a70"/><rect x="563.9" y="9.2" width="3" height="1" fill="#1a0612"/><rect x="245.8" y="6.6" width="1.5" height="1.5" fill="#e060b0"/><rect x="4.0" y="8.2" width="3" height="1" fill="#1a0612"/><rect x="363.7" y="10.9" width="1.5" height="1.5" fill="#7a1a55"/><rect x="798.6" y="6.3" width="2.5" height="1.5" fill="#1a0612"/><rect x="263.6" y="3.2" width="2" height="1.5" fill="#30101f"/><rect x="508.1" y="3.6" width="2" height="1" fill="#1a0612"/><rect x="348.3" y="2.6" width="3" height="1.5" fill="#b03078"/><rect x="398.6" y="3.5" width="1.5" height="1" fill="#f090c8"/><rect x="296.3" y="9.1" width="1.5" height="1.5" fill="#a02a70"/><rect x="889.5" y="9.7" width="1" height="1" fill="#c8408f"/><rect x="234.7" y="9.8" width="2" height="2" fill="#7a1a55"/><rect x="492.7" y="11.0" width="3" height="2" fill="#d04a98"/><rect x="356.4" y="3.3" width="3" height="2" fill="#f090c8"/><rect x="414.6" y="-0.9" width="1" height="2" fill="#a02a70"/><rect x="90.6" y="3.5" width="2.5" height="2" fill="#30101f"/><rect x="849.5" y="0.9" width="1.5" height="1.5" fill="#1a0612"/><rect x="367.5" y="8.2" width="3" height="1.5" fill="#30101f"/><rect x="683.0" y="0.1" width="2" height="1.5" fill="#f090c8"/><rect x="895.3" y="8.9" width="3" height="1" fill="#e060b0"/><rect x="600.2" y="2.5" width="2" height="2" fill="#d04a98"/><rect x="577.5" y="5.3" width="3" height="1" fill="#30101f"/><rect x="817.2" y="3.9" width="1" height="2" fill="#e060b0"/><rect x="323.2" y="10.9" width="1" height="2" fill="#d04a98"/><rect x="9.8" y="-1.0" width="3" height="1" fill="#7a1a55"/><rect x="363.8" y="0.2" width="1" height="2" fill="#c8408f"/><rect x="179.9" y="5.0" width="3" height="2" fill="#7a1a55"/><rect x="797.1" y="9.7" width="3" height="1" fill="#a02a70"/><rect x="376.2" y="0.5" width="1.5" height="2" fill="#30101f"/><rect x="97.6" y="0.2" width="1.5" height="2" fill="#1a0612"/><rect x="753.2" y="6.4" width="1" height="2" fill="#c8408f"/><rect x="626.4" y="5.9" width="1.5" height="2" fill="#a02a70"/><rect x="323.8" y="1.0" width="2" height="2" fill="#e060b0"/><rect x="786.3" y="10.4" width="1" height="1.5" fill="#a02a70"/><rect x="411.6" y="3.6" width="1" height="1" fill="#d04a98"/><rect x="533.1" y="10.5" width="2.5" height="1" fill="#a02a70"/><rect x="228.1" y="-0.5" width="3" height="1" fill="#f090c8"/><rect x="5.6" y="9.4" width="2.5" height="1.5" fill="#d04a98"/><rect x="551.3" y="10.5" width="2.5" height="1" fill="#a02a70"/><rect x="619.7" y="7.1" width="3" height="1" fill="#d04a98"/><rect x="282.9" y="9.5" width="2.5" height="1" fill="#a02a70"/><rect x="80.0" y="1.0" width="2.5" height="1" fill="#c8408f"/><rect x="889.0" y="2.5" width="3" height="1.5" fill="#e060b0"/><rect x="306.5" y="9.5" width="2" height="1.5" fill="#e060b0"/><rect x="879.5" y="4.1" width="2" height="2" fill="#a02a70"/><rect x="354.4" y="4.6" width="2" height="1" fill="#d04a98"/><rect x="31.9" y="7.0" width="2" height="1" fill="#a02a70"/><rect x="645.9" y="0.1" width="2" height="2" fill="#b03078"/><rect x="507.8" y="4.6" width="1.5" height="1" fill="#f090c8"/><rect x="322.9" y="7.7" width="2.5" height="2" fill="#a02a70"/><rect x="272.0" y="4.7" width="1.5" height="1" fill="#1a0612"/><rect x="617.9" y="10.3" width="2" height="2" fill="#1a0612"/><rect x="537.6" y="3.4" width="1.5" height="1.5" fill="#30101f"/><rect x="194.5" y="9.5" width="1" height="2" fill="#30101f"/><rect x="83.7" y="9.2" width="2.5" height="1" fill="#b03078"/><rect x="284.4" y="3.7" width="1" height="2" fill="#b03078"/><rect x="710.2" y="1.8" width="1.5" height="2" fill="#e060b0"/><rect x="62.3" y="10.0" width="3" height="1.5" fill="#a02a70"/><rect x="60.3" y="2.7" width="1.5" height="1.5" fill="#b03078"/><rect x="747.4" y="3.8" width="2" height="1.5" fill="#1a0612"/><rect x="709.1" y="9.6" width="1.5" height="1.5" fill="#b03078"/><rect x="27.1" y="7.2" width="2" height="1.5" fill="#c8408f"/><rect x="603.0" y="7.4" width="1.5" height="1.5" fill="#f090c8"/><rect x="829.0" y="0.2" width="2" height="1" fill="#7a1a55"/><rect x="835.1" y="7.8" width="1" height="1.5" fill="#c8408f"/><rect x="556.8" y="4.2" width="2" height="1" fill="#d04a98"/><rect x="675.6" y="5.6" width="1.5" height="2" fill="#a02a70"/><rect x="521.7" y="7.6" width="2" height="1.5" fill="#f090c8"/><rect x="856.1" y="0.3" width="2" height="1" fill="#c8408f"/><rect x="891.3" y="7.2" width="1" height="1.5" fill="#a02a70"/><rect x="711.1" y="3.1" width="1" height="1.5" fill="#d04a98"/><rect x="913.3" y="6.4" width="1.5" height="1.5" fill="#30101f"/><rect x="82.3" y="10.4" width="2.5" height="1.5" fill="#f090c8"/><rect x="632.8" y="7.9" width="2.5" height="2" fill="#c8408f"/><rect x="619.1" y="1.5" width="3" height="1" fill="#1a0612"/><rect x="697.2" y="-0.5" width="3" height="1.5" fill="#b03078"/><rect x="500.0" y="10.6" width="1.5" height="2" fill="#7a1a55"/><rect x="228.5" y="-0.3" width="2" height="1.5" fill="#d04a98"/><rect x="84.7" y="6.6" width="1.5" height="1" fill="#1a0612"/><rect x="613.4" y="1.9" width="1.5" height="1" fill="#30101f"/><rect x="632.7" y="0.6" width="2" height="2" fill="#7a1a55"/><rect x="122.1" y="7.5" width="3" height="2" fill="#a02a70"/><rect x="305.2" y="8.8" width="3" height="1.5" fill="#b03078"/><rect x="619.5" y="0.9" width="2.5" height="1.5" fill="#a02a70"/><rect x="104.7" y="2.5" width="2" height="1.5" fill="#a02a70"/><rect x="39.7" y="9.7" width="2" height="1" fill="#e060b0"/><rect x="642.0" y="4.4" width="1" height="1" fill="#f090c8"/><rect x="407.2" y="5.8" width="2" height="1" fill="#30101f"/><rect x="65.7" y="-0.9" width="2.5" height="1" fill="#f090c8"/><rect x="896.9" y="5.8" width="1" height="2" fill="#1a0612"/><rect x="875.4" y="4.9" width="3" height="1.5" fill="#c8408f"/><rect x="328.8" y="0.1" width="2" height="2" fill="#7a1a55"/><rect x="597.6" y="-0.1" width="1" height="1" fill="#d04a98"/><rect x="768.2" y="2.6" width="1.5" height="2" fill="#30101f"/><rect x="773.8" y="10.1" width="1.5" height="1" fill="#7a1a55"/><rect x="679.2" y="2.9" width="1.5" height="2" fill="#f090c8"/><rect x="292.9" y="3.4" width="3" height="1.5" fill="#7a1a55"/><rect x="219.0" y="-0.5" width="3" height="2" fill="#d04a98"/><rect x="828.3" y="10.3" width="2.5" height="1.5" fill="#1a0612"/><rect x="668.6" y="10.9" width="3" height="2" fill="#e060b0"/><rect x="129.8" y="1.7" width="1.5" height="1.5" fill="#d04a98"/><rect x="82.0" y="-0.5" width="2.5" height="1.5" fill="#a02a70"/><rect x="199.7" y="3.5" width="1" height="2" fill="#30101f"/><rect x="389.3" y="2.4" width="1" height="2" fill="#d04a98"/><rect x="814.9" y="-0.2" width="1" height="2" fill="#b03078"/><rect x="827.2" y="1.0" width="2" height="1" fill="#1a0612"/><rect x="735.8" y="7.1" width="3" height="1" fill="#1a0612"/><rect x="77.8" y="2.9" width="2.5" height="1.5" fill="#30101f"/><rect x="831.5" y="9.4" width="2.5" height="2" fill="#e060b0"/><rect x="742.2" y="-0.3" width="2" height="2" fill="#7a1a55"/><rect x="517.0" y="4.1" width="2" height="1.5" fill="#b03078"/><rect x="273.9" y="3.1" width="1" height="1" fill="#a02a70"/><rect x="621.0" y="4.4" width="1" height="1" fill="#f090c8"/><rect x="507.7" y="10.3" width="2" height="2" fill="#a02a70"/><rect x="516.8" y="3.8" width="1" height="1" fill="#b03078"/><rect x="886.2" y="1.4" width="1" height="1" fill="#7a1a55"/><rect x="594.5" y="1.3" width="2" height="2" fill="#1a0612"/><rect x="207.7" y="4.5" width="3" height="2" fill="#e060b0"/><rect x="673.1" y="9.9" width="3" height="1" fill="#d04a98"/><rect x="621.7" y="8.6" width="1.5" height="2" fill="#30101f"/><rect x="464.1" y="9.1" width="1" height="2" fill="#30101f"/><rect x="93.4" y="9.0" width="2.5" height="2" fill="#b03078"/><rect x="885.7" y="1.3" width="2.5" height="1" fill="#b03078"/><rect x="341.6" y="6.4" width="2.5" height="1" fill="#c8408f"/><rect x="340.7" y="-0.8" width="3" height="1" fill="#1a0612"/><rect x="274.4" y="7.5" width="2.5" height="1" fill="#a02a70"/><rect x="515.1" y="10.0" width="2" height="1" fill="#f090c8"/><rect x="682.1" y="3.1" width="1" height="1.5" fill="#e060b0"/><rect x="219.0" y="5.2" width="3" height="1.5" fill="#1a0612"/><rect x="39.8" y="6.2" width="1" height="1.5" fill="#30101f"/><rect x="299.5" y="6.2" width="1" height="2" fill="#a02a70"/><rect x="233.0" y="1.3" width="2.5" height="1" fill="#1a0612"/><rect x="103.9" y="-0.7" width="1" height="1" fill="#7a1a55"/><rect x="169.5" y="5.7" width="2" height="2" fill="#d04a98"/><rect x="765.1" y="6.1" width="2" height="2" fill="#7a1a55"/><rect x="868.1" y="-0.8" width="2" height="1" fill="#1a0612"/><rect x="459.1" y="9.5" width="1" height="1" fill="#b03078"/><rect x="567.7" y="6.7" width="3" height="1.5" fill="#1a0612"/><rect x="885.3" y="7.3" width="2.5" height="1.5" fill="#a02a70"/><rect x="798.8" y="6.3" width="1" height="1.5" fill="#f090c8"/><rect x="483.4" y="2.7" width="1.5" height="2" fill="#c8408f"/><rect x="193.4" y="8.8" width="2.5" height="1.5" fill="#1a0612"/><rect x="354.9" y="3.2" width="1" height="1.5" fill="#1a0612"/><rect x="305.4" y="-0.8" width="2.5" height="2" fill="#c8408f"/><rect x="577.3" y="7.7" width="1.5" height="1.5" fill="#d04a98"/><rect x="250.1" y="5.0" width="2" height="1.5" fill="#30101f"/><rect x="534.7" y="0.7" width="1" height="2" fill="#e060b0"/><rect x="798.2" y="8.3" width="3" height="2" fill="#e060b0"/><rect x="332.1" y="2.4" width="1.5" height="1" fill="#e060b0"/><rect x="278.2" y="8.2" width="2" height="2" fill="#a02a70"/><rect x="320.6" y="5.6" width="2.5" height="1.5" fill="#c8408f"/><rect x="644.4" y="7.1" width="2.5" height="2" fill="#f090c8"/><rect x="818.2" y="8.7" width="2" height="1" fill="#b03078"/><rect x="187.9" y="9.7" width="2.5" height="1.5" fill="#1a0612"/><rect x="362.4" y="8.3" width="1.5" height="2" fill="#e060b0"/><rect x="131.6" y="7.6" width="2" height="2" fill="#30101f"/><rect x="602.9" y="10.6" width="1" height="1" fill="#e060b0"/><rect x="535.2" y="2.7" width="2" height="1.5" fill="#f090c8"/><rect x="888.1" y="7.3" width="1" height="1.5" fill="#f090c8"/><rect x="822.7" y="2.3" width="2" height="2" fill="#c8408f"/><rect x="694.0" y="6.5" width="1.5" height="2" fill="#c8408f"/><rect x="199.8" y="3.8" width="1.5" height="2" fill="#7a1a55"/><rect x="790.6" y="6.8" width="1.5" height="1" fill="#c8408f"/><rect x="881.3" y="6.2" width="1" height="1" fill="#f090c8"/><rect x="657.9" y="-0.9" width="2" height="2" fill="#c8408f"/><rect x="585.5" y="10.1" width="1.5" height="1.5" fill="#f090c8"/><rect x="794.0" y="-0.7" width="2.5" height="1.5" fill="#f090c8"/><rect x="159.7" y="9.4" width="1" height="1" fill="#f090c8"/><rect x="710.0" y="10.9" width="2.5" height="1.5" fill="#1a0612"/><rect x="799.1" y="-0.7" width="2" height="2" fill="#f090c8"/><rect x="51.3" y="6.4" width="2" height="1" fill="#e060b0"/><rect x="17.0" y="1.5" width="3" height="1" fill="#f090c8"/><rect x="744.8" y="4.1" width="3" height="2" fill="#30101f"/><rect x="140.4" y="10.8" width="3" height="1.5" fill="#a02a70"/><rect x="678.1" y="2.1" width="2.5" height="1" fill="#7a1a55"/><rect x="596.3" y="5.6" width="2.5" height="2" fill="#7a1a55"/><rect x="330.6" y="5.4" width="2" height="1" fill="#7a1a55"/><rect x="8.3" y="4.7" width="2" height="1" fill="#a02a70"/><rect x="366.8" y="10.7" width="1" height="2" fill="#b03078"/><rect x="111.8" y="5.5" width="1.5" height="2" fill="#b03078"/><rect x="237.1" y="6.3" width="1.5" height="1" fill="#b03078"/><rect x="483.6" y="3.2" width="1.5" height="1.5" fill="#1a0612"/><rect x="195.0" y="9.9" width="2.5" height="1.5" fill="#a02a70"/><rect x="296.3" y="9.8" width="1" height="2" fill="#c8408f"/><rect x="59.9" y="6.7" width="2.5" height="2" fill="#f090c8"/><rect x="54.9" y="5.8" width="2.5" height="1.5" fill="#a02a70"/><rect x="28.1" y="-0.8" width="2.5" height="1" fill="#a02a70"/><rect x="324.2" y="2.9" width="2.5" height="2" fill="#7a1a55"/><rect x="273.1" y="10.9" width="1.5" height="2" fill="#b03078"/><rect x="436.8" y="10.2" width="2" height="1" fill="#7a1a55"/><rect x="258.5" y="3.0" width="2.5" height="1" fill="#b03078"/><rect x="292.6" y="6.3" width="2.5" height="1" fill="#c8408f"/><rect x="807.8" y="1.5" width="2" height="1" fill="#1a0612"/><rect x="166.8" y="9.4" width="2" height="2" fill="#c8408f"/><rect x="736.6" y="0.8" width="1" height="1" fill="#7a1a55"/><rect x="138.0" y="7.8" width="1" height="1" fill="#1a0612"/><rect x="624.7" y="0.1" width="2" height="2" fill="#d04a98"/><rect x="807.0" y="10.8" width="1" height="2" fill="#a02a70"/><rect x="184.3" y="6.5" width="1" height="1" fill="#b03078"/><rect x="461.9" y="1.8" width="2.5" height="2" fill="#e060b0"/><rect x="666.6" y="-0.4" width="2" height="1" fill="#e060b0"/><rect x="110.2" y="4.8" width="1.5" height="2" fill="#d04a98"/><rect x="2.4" y="1.7" width="3" height="1" fill="#30101f"/><rect x="458.2" y="0.3" width="2" height="1.5" fill="#e060b0"/><rect x="319.7" y="1.6" width="1.5" height="2" fill="#e060b0"/><rect x="249.8" y="1.1" width="2" height="1.5" fill="#e060b0"/><rect x="884.2" y="1.4" width="1" height="1.5" fill="#30101f"/><rect x="871.0" y="2.2" width="2" height="2" fill="#c8408f"/><rect x="597.6" y="5.5" width="3" height="1.5" fill="#d04a98"/><rect x="898.9" y="9.5" width="2" height="1.5" fill="#d04a98"/><rect x="291.2" y="4.0" width="1.5" height="1.5" fill="#d04a98"/><rect x="806.7" y="8.6" width="1" height="1" fill="#30101f"/><rect x="847.5" y="2.1" width="3" height="2" fill="#d04a98"/><rect x="906.8" y="8.9" width="1" height="1" fill="#c8408f"/><rect x="831.3" y="-0.4" width="3" height="1.5" fill="#1a0612"/><rect x="502.3" y="2.8" width="3" height="1" fill="#1a0612"/><rect x="682.8" y="9.2" width="3" height="1.5" fill="#30101f"/><rect x="910.2" y="1.8" width="2.5" height="1.5" fill="#e060b0"/><rect x="360.1" y="5.3" width="3" height="2" fill="#f090c8"/><rect x="65.9" y="8.6" width="1.5" height="2" fill="#7a1a55"/><rect x="240.0" y="9.1" width="2" height="2" fill="#1a0612"/><rect x="522.2" y="11.0" width="1" height="2" fill="#f090c8"/><rect x="479.4" y="5.3" width="2" height="1" fill="#b03078"/><rect x="139.5" y="6.9" width="1.5" height="2" fill="#c8408f"/><rect x="294.6" y="3.3" width="2.5" height="1" fill="#d04a98"/><rect x="140.8" y="2.0" width="1" height="1.5" fill="#f090c8"/><rect x="606.6" y="5.3" width="2" height="1.5" fill="#e060b0"/><rect x="251.6" y="2.5" width="2.5" height="2" fill="#e060b0"/><rect x="411.1" y="4.7" width="1.5" height="2" fill="#b03078"/><rect x="5.4" y="0.6" width="2.5" height="2" fill="#a02a70"/><rect x="569.8" y="5.3" width="2.5" height="1.5" fill="#c8408f"/><rect x="508.9" y="-1.0" width="2" height="1" fill="#b03078"/><rect x="280.5" y="5.5" width="2" height="1.5" fill="#a02a70"/><rect x="242.8" y="4.3" width="3" height="2" fill="#1a0612"/><rect x="785.9" y="1.4" width="2.5" height="1.5" fill="#f090c8"/><rect x="842.3" y="7.6" width="2.5" height="1.5" fill="#c8408f"/><rect x="652.0" y="2.5" width="2.5" height="1.5" fill="#7a1a55"/><rect x="322.4" y="3.6" width="3" height="1" fill="#a02a70"/><rect x="894.6" y="9.2" width="3" height="1.5" fill="#e060b0"/><rect x="609.0" y="3.0" width="1" height="1" fill="#1a0612"/><rect x="347.2" y="5.3" width="2.5" height="2" fill="#c8408f"/><rect x="98.6" y="5.8" width="2.5" height="2" fill="#d04a98"/><rect x="379.6" y="4.7" width="1" height="1.5" fill="#d04a98"/><rect x="449.5" y="5.1" width="1" height="2" fill="#a02a70"/><rect x="677.5" y="3.8" width="1" height="2" fill="#7a1a55"/><rect x="506.8" y="8.2" width="2.5" height="1" fill="#e060b0"/><rect x="201.9" y="-0.1" width="1" height="1" fill="#1a0612"/><rect x="80.7" y="8.0" width="3" height="1.5" fill="#c8408f"/><rect x="754.0" y="1.4" width="2" height="1.5" fill="#c8408f"/><rect x="503.6" y="8.0" width="3" height="1" fill="#d04a98"/><rect x="747.4" y="9.5" width="1.5" height="1.5" fill="#f090c8"/><rect x="174.1" y="10.8" width="1.5" height="2" fill="#7a1a55"/><rect x="475.8" y="0.0" width="2.5" height="1.5" fill="#7a1a55"/><rect x="508.5" y="5.1" width="2.5" height="2" fill="#c8408f"/><rect x="280.8" y="2.0" width="2.5" height="1.5" fill="#30101f"/><rect x="235.2" y="1.4" width="1" height="1" fill="#30101f"/><rect x="596.8" y="10.2" width="2.5" height="2" fill="#b03078"/><rect x="334.6" y="8.6" width="1.5" height="1.5" fill="#30101f"/><rect x="607.5" y="7.8" width="1" height="2" fill="#e060b0"/><rect x="374.2" y="5.8" width="2" height="1" fill="#7a1a55"/><rect x="201.0" y="4.3" width="1.5" height="2" fill="#a02a70"/><rect x="734.3" y="6.1" width="2.5" height="1.5" fill="#1a0612"/><rect x="186.5" y="1.4" width="1.5" height="1.5" fill="#e060b0"/><rect x="44.8" y="9.4" width="1" height="2" fill="#1a0612"/><rect x="164.9" y="10.1" width="3" height="2" fill="#b03078"/><rect x="455.9" y="7.1" width="2" height="1" fill="#30101f"/><rect x="767.0" y="0.7" width="1.5" height="2" fill="#e060b0"/><rect x="426.1" y="1.4" width="1" height="1" fill="#d04a98"/><rect x="204.7" y="9.0" width="2.5" height="2" fill="#d04a98"/><rect x="141.7" y="-0.3" width="1.5" height="1" fill="#b03078"/><rect x="765.1" y="2.5" width="1.5" height="2" fill="#f090c8"/><rect x="646.9" y="7.6" width="2" height="1.5" fill="#f090c8"/><rect x="502.1" y="1.6" width="1.5" height="1.5" fill="#c8408f"/><rect x="299.8" y="0.9" width="2" height="1" fill="#30101f"/><rect x="635.2" y="1.4" width="1.5" height="2" fill="#b03078"/><rect x="393.3" y="7.1" width="1" height="1" fill="#f090c8"/><rect x="111.7" y="10.1" width="3" height="2" fill="#e060b0"/><rect x="266.0" y="3.2" width="2.5" height="1" fill="#a02a70"/><rect x="443.5" y="9.4" width="3" height="2" fill="#30101f"/><rect x="692.0" y="1.4" width="2.5" height="1.5" fill="#a02a70"/><rect x="529.6" y="2.6" width="3" height="2" fill="#e060b0"/><rect x="885.1" y="3.1" width="1.5" height="2" fill="#7a1a55"/><rect x="45.8" y="3.0" width="2.5" height="1.5" fill="#a02a70"/><rect x="301.5" y="3.4" width="1" height="1.5" fill="#e060b0"/><rect x="662.2" y="4.5" width="3" height="1" fill="#b03078"/><rect x="545.0" y="4.5" width="1" height="1" fill="#30101f"/><rect x="530.0" y="4.0" width="1.5" height="1.5" fill="#f090c8"/><rect x="69.8" y="7.7" width="1.5" height="1.5" fill="#b03078"/><rect x="606.4" y="0.1" width="1" height="2" fill="#1a0612"/><rect x="277.6" y="2.1" width="1" height="1" fill="#e060b0"/><rect x="140.1" y="2.2" width="3" height="1" fill="#f090c8"/><rect x="428.0" y="1.0" width="3" height="1" fill="#30101f"/><rect x="234.4" y="10.4" width="2" height="1.5" fill="#30101f"/><rect x="186.2" y="0.5" width="1.5" height="2" fill="#30101f"/><rect x="459.1" y="9.7" width="1" height="1" fill="#c8408f"/><rect x="446.9" y="8.5" width="3" height="1" fill="#a02a70"/><rect x="79.6" y="1.1" width="2" height="1" fill="#d04a98"/><rect x="359.8" y="5.2" width="2" height="2" fill="#e060b0"/><rect x="77.2" y="5.9" width="1.5" height="1" fill="#30101f"/><rect x="650.4" y="-0.3" width="1.5" height="1" fill="#f090c8"/><rect x="899.4" y="-0.5" width="3" height="2" fill="#b03078"/><rect x="745.4" y="3.1" width="2.5" height="2" fill="#b03078"/><rect x="9.9" y="10.3" width="2.5" height="1.5" fill="#c8408f"/><rect x="80.6" y="1.9" width="3" height="2" fill="#b03078"/><rect x="138.4" y="3.1" width="1.5" height="1" fill="#a02a70"/><rect x="846.3" y="7.2" width="1" height="1" fill="#1a0612"/><rect x="34.5" y="5.3" width="2" height="1" fill="#e060b0"/><rect x="182.1" y="6.5" width="2" height="1.5" fill="#e060b0"/><rect x="595.6" y="10.7" width="3" height="1" fill="#1a0612"/><rect x="615.5" y="7.9" width="1.5" height="1.5" fill="#7a1a55"/><rect x="827.9" y="7.9" width="3" height="1" fill="#d04a98"/><rect x="353.0" y="6.7" width="3" height="1.5" fill="#30101f"/><rect x="599.5" y="6.6" width="1" height="1.5" fill="#a02a70"/><rect x="219.7" y="6.1" width="3" height="1" fill="#1a0612"/><rect x="526.1" y="10.2" width="1" height="1.5" fill="#d04a98"/><rect x="726.2" y="7.2" width="2" height="1.5" fill="#d04a98"/><rect x="867.5" y="1.7" width="2" height="2" fill="#d04a98"/><rect x="725.5" y="-0.9" width="2.5" height="2" fill="#c8408f"/><rect x="870.2" y="9.5" width="2.5" height="1.5" fill="#d04a98"/><rect x="553.4" y="4.5" width="2" height="2" fill="#a02a70"/><rect x="76.0" y="3.7" width="2.5" height="2" fill="#c8408f"/><rect x="267.3" y="0.1" width="2" height="1" fill="#1a0612"/><rect x="372.8" y="5.5" width="1.5" height="1" fill="#a02a70"/><rect x="624.9" y="-0.5" width="1.5" height="1.5" fill="#7a1a55"/><rect x="304.4" y="0.8" width="1.5" height="1" fill="#f090c8"/><rect x="814.2" y="6.3" width="2.5" height="1.5" fill="#1a0612"/><rect x="291.4" y="9.5" width="3" height="1" fill="#b03078"/><rect x="357.7" y="-0.9" width="1.5" height="1" fill="#a02a70"/><rect x="415.9" y="8.7" width="2" height="2" fill="#f090c8"/><rect x="618.8" y="10.8" width="3" height="2" fill="#d04a98"/><rect x="123.6" y="8.0" width="2" height="2" fill="#d04a98"/><rect x="69.5" y="6.5" width="2.5" height="1.5" fill="#7a1a55"/><rect x="331.1" y="6.9" width="2.5" height="2" fill="#c8408f"/><rect x="830.1" y="5.0" width="2" height="2" fill="#c8408f"/><rect x="52.1" y="9.0" width="1" height="2" fill="#d04a98"/><rect x="409.7" y="8.0" width="1.5" height="2" fill="#1a0612"/><rect x="32.1" y="2.9" width="1.5" height="1" fill="#7a1a55"/><rect x="132.2" y="6.1" width="3" height="2" fill="#c8408f"/><rect x="912.9" y="1.1" width="3" height="2" fill="#7a1a55"/><rect x="574.0" y="1.9" width="3" height="1" fill="#d04a98"/><rect x="501.6" y="3.9" width="1" height="2" fill="#d04a98"/><rect x="451.1" y="10.7" width="2" height="2" fill="#7a1a55"/><rect x="296.6" y="9.0" width="2.5" height="1" fill="#30101f"/><rect x="317.7" y="0.7" width="3" height="1" fill="#b03078"/><rect x="281.8" y="5.2" width="2" height="1" fill="#7a1a55"/><rect x="888.9" y="8.3" width="2" height="2" fill="#b03078"/><rect x="249.2" y="9.7" width="2.5" height="1" fill="#f090c8"/><rect x="849.2" y="3.8" width="2" height="1.5" fill="#d04a98"/><rect x="292.5" y="8.5" width="2.5" height="1.5" fill="#e060b0"/><rect x="186.6" y="9.9" width="2.5" height="2" fill="#d04a98"/><rect x="583.0" y="8.3" width="2" height="1" fill="#b03078"/><rect x="255.2" y="5.4" width="3" height="2" fill="#d04a98"/><rect x="688.7" y="2.3" width="2" height="2" fill="#d04a98"/><rect x="484.3" y="2.5" width="1" height="1.5" fill="#1a0612"/><rect x="705.8" y="-0.5" width="3" height="1.5" fill="#f090c8"/><rect x="551.0" y="3.3" width="1.5" height="1" fill="#30101f"/><rect x="88.2" y="6.2" width="2.5" height="2" fill="#e060b0"/><rect x="851.0" y="1.0" width="1.5" height="2" fill="#e060b0"/><rect x="708.8" y="3.7" width="2" height="1.5" fill="#d04a98"/><rect x="457.3" y="3.0" width="1.5" height="2" fill="#b03078"/><rect x="486.6" y="5.3" width="2" height="1" fill="#a02a70"/><rect x="309.9" y="-0.2" width="2.5" height="1" fill="#30101f"/><rect x="2.8" y="5.9" width="1.5" height="2" fill="#d04a98"/><rect x="369.4" y="5.9" width="2" height="2" fill="#b03078"/><rect x="138.3" y="7.1" width="1.5" height="2" fill="#e060b0"/><rect x="822.0" y="9.8" width="2.5" height="1.5" fill="#b03078"/><rect x="592.4" y="9.5" width="2.5" height="2" fill="#7a1a55"/><rect x="651.5" y="8.3" width="3" height="2" fill="#7a1a55"/><rect x="556.0" y="9.8" width="2" height="1" fill="#f090c8"/><rect x="618.5" y="10.7" width="1" height="1.5" fill="#c8408f"/><rect x="640.0" y="-0.1" width="2" height="1" fill="#c8408f"/><rect x="418.8" y="8.2" width="2.5" height="1.5" fill="#30101f"/><rect x="54.1" y="4.3" width="3" height="2" fill="#c8408f"/><rect x="36.2" y="8.9" width="1" height="1.5" fill="#a02a70"/><rect x="269.1" y="10.2" width="2" height="2" fill="#a02a70"/><rect x="199.3" y="8.5" width="1.5" height="1.5" fill="#30101f"/><rect x="652.5" y="1.7" width="1.5" height="1" fill="#30101f"/><rect x="245.3" y="3.5" width="2" height="2" fill="#e060b0"/><rect x="535.2" y="3.8" width="3" height="2" fill="#d04a98"/><rect x="207.0" y="9.4" width="1" height="1.5" fill="#30101f"/><rect x="301.4" y="10.8" width="1" height="2" fill="#1a0612"/><rect x="526.7" y="4.2" width="3" height="1.5" fill="#a02a70"/><rect x="312.6" y="1.3" width="2.5" height="1" fill="#7a1a55"/><rect x="695.0" y="-0.1" width="3" height="1" fill="#1a0612"/><rect x="711.3" y="8.5" width="1.5" height="1.5" fill="#a02a70"/><rect x="512.6" y="7.4" width="2" height="2" fill="#c8408f"/><rect x="841.7" y="7.7" width="1" height="1" fill="#f090c8"/><rect x="188.2" y="-0.8" width="3" height="1.5" fill="#30101f"/><rect x="325.2" y="1.0" width="2" height="1.5" fill="#7a1a55"/><rect x="96.3" y="7.9" width="2" height="1.5" fill="#c8408f"/><rect x="736.1" y="4.5" width="1" height="1.5" fill="#e060b0"/><rect x="785.2" y="3.4" width="2.5" height="1.5" fill="#e060b0"/><rect x="834.2" y="8.5" width="2.5" height="1" fill="#e060b0"/><rect x="483.4" y="2.0" width="2.5" height="1" fill="#f090c8"/><rect x="230.5" y="-0.7" width="1.5" height="2" fill="#7a1a55"/><rect x="865.0" y="10.8" width="2.5" height="2" fill="#d04a98"/><rect x="147.3" y="9.8" width="2.5" height="1" fill="#b03078"/><rect x="11.8" y="1.6" width="3" height="2" fill="#d04a98"/><rect x="25.3" y="8.8" width="1" height="1.5" fill="#c8408f"/><rect x="186.6" y="5.9" width="1" height="1.5" fill="#f090c8"/><rect x="571.5" y="9.6" width="2.5" height="2" fill="#a02a70"/><rect x="6.7" y="1.5" width="2" height="1.5" fill="#e060b0"/><rect x="89.7" y="9.5" width="1.5" height="1.5" fill="#1a0612"/><rect x="523.4" y="10.0" width="2.5" height="1" fill="#c8408f"/><rect x="788.5" y="1.0" width="1.5" height="2" fill="#1a0612"/><rect x="633.2" y="4.7" width="1.5" height="1" fill="#1a0612"/><rect x="548.2" y="-0.2" width="1.5" height="1" fill="#c8408f"/><rect x="359.0" y="8.5" width="1.5" height="2" fill="#c8408f"/><rect x="222.0" y="9.9" width="1.5" height="1" fill="#c8408f"/><rect x="426.9" y="3.8" width="1.5" height="2" fill="#c8408f"/><rect x="851.3" y="6.7" width="2.5" height="1.5" fill="#c8408f"/><rect x="140.4" y="-0.8" width="1" height="2" fill="#e060b0"/><rect x="171.0" y="8.7" width="1.5" height="2" fill="#30101f"/><rect x="295.8" y="5.1" width="2.5" height="1" fill="#e060b0"/><rect x="779.0" y="5.7" width="1" height="2" fill="#30101f"/><rect x="567.2" y="6.1" width="3" height="1" fill="#c8408f"/><rect x="605.2" y="6.4" width="2.5" height="1.5" fill="#c8408f"/><rect x="512.3" y="1.5" width="1.5" height="2" fill="#1a0612"/><rect x="191.0" y="7.5" width="1.5" height="2" fill="#d04a98"/><rect x="899.7" y="6.4" width="1" height="2" fill="#30101f"/><rect x="322.6" y="0.1" width="1.5" height="1" fill="#e060b0"/><rect x="336.3" y="2.6" width="2" height="1" fill="#1a0612"/><rect x="554.9" y="10.7" width="1.5" height="1" fill="#e060b0"/><rect x="68.6" y="0.4" width="3" height="1" fill="#30101f"/><rect x="352.6" y="10.8" width="3" height="2" fill="#a02a70"/><rect x="838.5" y="7.8" width="1" height="1" fill="#c8408f"/><rect x="655.8" y="-0.6" width="1.5" height="1.5" fill="#c8408f"/><rect x="164.5" y="10.3" width="2.5" height="1.5" fill="#b03078"/><rect x="231.2" y="2.6" width="2" height="1" fill="#f090c8"/><rect x="349.8" y="0.9" width="1.5" height="2" fill="#1a0612"/><rect x="697.5" y="9.0" width="2" height="1.5" fill="#a02a70"/><rect x="12.0" y="5.5" width="2" height="1" fill="#30101f"/><rect x="810.9" y="10.1" width="2" height="1" fill="#a02a70"/><rect x="814.2" y="8.5" width="3" height="1" fill="#e060b0"/><rect x="32.4" y="9.2" width="2.5" height="2" fill="#f090c8"/><rect x="335.9" y="5.4" width="2.5" height="1" fill="#a02a70"/><rect x="485.8" y="6.8" width="3" height="1" fill="#d04a98"/><rect x="852.2" y="5.2" width="1" height="2" fill="#a02a70"/><rect x="199.5" y="8.1" width="1" height="2" fill="#7a1a55"/><rect x="394.7" y="0.4" width="1.5" height="2" fill="#1a0612"/><rect x="562.1" y="1.0" width="2" height="1.5" fill="#a02a70"/><rect x="312.7" y="10.5" width="1" height="2" fill="#a02a70"/><rect x="586.6" y="6.4" width="3" height="1" fill="#e060b0"/><rect x="547.0" y="7.3" width="2" height="1" fill="#e060b0"/><rect x="667.6" y="5.4" width="1" height="1.5" fill="#e060b0"/><rect x="130.1" y="0.4" width="2.5" height="2" fill="#30101f"/><rect x="629.1" y="2.3" width="2.5" height="1" fill="#e060b0"/><rect x="233.3" y="3.7" width="1.5" height="1.5" fill="#e060b0"/><rect x="788.1" y="4.5" width="2" height="1" fill="#c8408f"/><rect x="355.0" y="8.4" width="1" height="1" fill="#f090c8"/><rect x="613.7" y="2.3" width="1" height="1" fill="#e060b0"/><rect x="828.0" y="0.9" width="3" height="1.5" fill="#7a1a55"/><rect x="165.3" y="0.7" width="1" height="1" fill="#d04a98"/><rect x="232.4" y="0.1" width="3" height="1" fill="#c8408f"/><rect x="59.3" y="-0.8" width="1.5" height="1.5" fill="#f090c8"/><rect x="496.1" y="1.1" width="2" height="2" fill="#7a1a55"/><rect x="339.0" y="1.0" width="1" height="1" fill="#b03078"/><rect x="261.0" y="3.6" width="1" height="1" fill="#a02a70"/><rect x="811.3" y="8.2" width="2" height="1" fill="#1a0612"/><rect x="240.6" y="-0.9" width="1" height="2" fill="#d04a98"/><rect x="765.3" y="1.8" width="1" height="1.5" fill="#1a0612"/><rect x="446.0" y="0.3" width="3" height="2" fill="#1a0612"/><rect x="85.8" y="0.4" width="2.5" height="1" fill="#a02a70"/><rect x="389.6" y="-0.3" width="1.5" height="1" fill="#7a1a55"/><rect x="330.4" y="4.6" width="2" height="2" fill="#c8408f"/><rect x="65.4" y="1.7" width="1.5" height="2" fill="#d04a98"/><rect x="100.7" y="10.3" width="3" height="1" fill="#a02a70"/><rect x="477.2" y="5.1" width="2" height="1" fill="#e060b0"/><rect x="76.0" y="2.2" width="2.5" height="2" fill="#b03078"/><rect x="68.1" y="4.4" width="2" height="1" fill="#a02a70"/><rect x="256.8" y="8.5" width="1" height="1" fill="#1a0612"/><rect x="440.6" y="1.2" width="1" height="2" fill="#30101f"/><rect x="825.9" y="6.7" width="1" height="2" fill="#a02a70"/><rect x="706.9" y="7.0" width="1.5" height="2" fill="#f090c8"/><rect x="132.7" y="8.6" width="2" height="2" fill="#c8408f"/><rect x="784.4" y="3.4" width="1.5" height="2" fill="#a02a70"/><rect x="14.3" y="4.5" width="1" height="1.5" fill="#a02a70"/><rect x="777.8" y="2.4" width="1.5" height="1" fill="#7a1a55"/><rect x="685.3" y="6.0" width="1" height="1.5" fill="#c8408f"/><rect x="621.4" y="-0.8" width="2.5" height="1" fill="#e060b0"/><rect x="436.5" y="5.1" width="2.5" height="2" fill="#a02a70"/><rect x="568.4" y="1.6" width="2.5" height="1" fill="#7a1a55"/><rect x="914.6" y="4.5" width="1.5" height="1.5" fill="#c8408f"/><rect x="372.4" y="3.1" width="1" height="2" fill="#f090c8"/><rect x="704.6" y="1.9" width="1" height="1" fill="#7a1a55"/><rect x="555.1" y="4.7" width="3" height="2" fill="#d04a98"/><rect x="126.0" y="1.9" width="1" height="1.5" fill="#d04a98"/><rect x="136.5" y="0.6" width="3" height="1" fill="#f090c8"/><rect x="811.2" y="-0.3" width="1.5" height="1.5" fill="#b03078"/><rect x="73.4" y="8.8" width="2.5" height="1.5" fill="#a02a70"/><rect x="787.1" y="10.5" width="2" height="2" fill="#d04a98"/><rect x="86.8" y="4.2" width="1" height="1" fill="#7a1a55"/><rect x="64.5" y="8.0" width="1.5" height="1" fill="#d04a98"/><rect x="67.1" y="3.5" width="2" height="2" fill="#30101f"/><rect x="533.5" y="4.4" width="2.5" height="2" fill="#30101f"/><rect x="536.5" y="8.6" width="3" height="2" fill="#a02a70"/><rect x="398.9" y="6.1" width="2" height="2" fill="#d04a98"/><rect x="166.1" y="7.3" width="2" height="2" fill="#a02a70"/><rect x="377.0" y="10.5" width="2" height="2" fill="#e060b0"/><rect x="641.5" y="-0.3" width="2.5" height="1" fill="#f090c8"/><rect x="731.6" y="-0.9" width="2.5" height="1.5" fill="#b03078"/><rect x="425.9" y="2.9" width="1.5" height="1.5" fill="#e060b0"/><rect x="876.5" y="1.5" width="2.5" height="1.5" fill="#b03078"/><rect x="823.6" y="1.8" width="2" height="1.5" fill="#1a0612"/><rect x="701.7" y="0.5" width="1.5" height="2" fill="#a02a70"/><rect x="804.2" y="0.4" width="3" height="1" fill="#d04a98"/><rect x="563.6" y="6.8" width="2.5" height="2" fill="#1a0612"/><rect x="862.3" y="5.9" width="2" height="1.5" fill="#d04a98"/><rect x="287.8" y="8.7" width="1" height="2" fill="#b03078"/><rect x="360.5" y="0.4" width="2" height="2" fill="#a02a70"/><rect x="580.6" y="7.5" width="1.5" height="1.5" fill="#7a1a55"/><rect x="593.6" y="1.0" width="1" height="2" fill="#1a0612"/><rect x="777.4" y="9.5" width="3" height="1" fill="#a02a70"/><rect x="820.8" y="6.1" width="2.5" height="2" fill="#30101f"/><rect x="249.3" y="-0.2" width="1" height="1" fill="#e060b0"/><rect x="636.7" y="-1.0" width="1.5" height="1" fill="#7a1a55"/><rect x="824.1" y="8.4" width="1.5" height="1" fill="#c8408f"/><rect x="104.5" y="10.2" width="1.5" height="1" fill="#1a0612"/><rect x="306.9" y="5.3" width="2" height="1.5" fill="#d04a98"/><rect x="684.0" y="9.5" width="2" height="1" fill="#e060b0"/><rect x="241.5" y="2.2" width="1" height="2" fill="#c8408f"/><rect x="637.4" y="2.2" width="2" height="1.5" fill="#30101f"/><rect x="450.0" y="1.3" width="3" height="1" fill="#b03078"/><rect x="767.6" y="4.1" width="2" height="2" fill="#c8408f"/><rect x="209.9" y="8.6" width="2.5" height="1" fill="#e060b0"/><rect x="536.4" y="1.3" width="2.5" height="1.5" fill="#a02a70"/><rect x="569.5" y="8.9" width="2.5" height="2" fill="#d04a98"/><rect x="126.5" y="1.3" width="3" height="1" fill="#e060b0"/><rect x="768.5" y="4.5" width="2" height="2" fill="#d04a98"/><rect x="477.5" y="3.0" width="1" height="1" fill="#a02a70"/><rect x="662.8" y="1.7" width="2" height="1" fill="#1a0612"/><rect x="562.5" y="9.8" width="1.5" height="1.5" fill="#7a1a55"/><rect x="120.1" y="-0.3" width="2.5" height="1.5" fill="#7a1a55"/><rect x="362.8" y="5.3" width="2" height="1" fill="#f090c8"/><rect x="81.6" y="-0.4" width="3" height="1" fill="#b03078"/><rect x="160.4" y="6.6" width="1.5" height="1.5" fill="#c8408f"/><rect x="180.9" y="0.4" width="3" height="2" fill="#30101f"/><rect x="796.0" y="7.2" width="2.5" height="2" fill="#7a1a55"/><rect x="709.5" y="0.3" width="1" height="2" fill="#d04a98"/><rect x="400.1" y="-0.2" width="3" height="1" fill="#1a0612"/><rect x="291.2" y="4.7" width="2.5" height="2" fill="#f090c8"/><rect x="489.5" y="8.4" width="2" height="2" fill="#c8408f"/><rect x="96.0" y="4.5" width="2" height="1" fill="#c8408f"/><rect x="785.3" y="10.3" width="3" height="1" fill="#e060b0"/><rect x="426.3" y="6.4" width="2" height="2" fill="#e060b0"/><rect x="780.0" y="6.9" width="2" height="1.5" fill="#30101f"/><rect x="78.4" y="3.7" width="1" height="2" fill="#c8408f"/><rect x="29.2" y="9.9" width="1.5" height="2" fill="#e060b0"/><rect x="640.6" y="2.8" width="3" height="2" fill="#d04a98"/><rect x="154.7" y="1.1" width="2.5" height="2" fill="#f090c8"/><rect x="331.6" y="9.7" width="2.5" height="2" fill="#e060b0"/><rect x="83.9" y="10.3" width="2.5" height="1.5" fill="#a02a70"/><rect x="875.1" y="6.2" width="2" height="1.5" fill="#d04a98"/><rect x="655.2" y="7.8" width="1.5" height="2" fill="#a02a70"/><rect x="837.7" y="4.9" width="3" height="1.5" fill="#a02a70"/><rect x="25.3" y="5.2" width="1.5" height="2" fill="#f090c8"/><rect x="286.8" y="7.8" width="2" height="2" fill="#a02a70"/><rect x="603.6" y="-0.3" width="1" height="1" fill="#f090c8"/><rect x="9.5" y="8.2" width="3" height="1" fill="#c8408f"/><rect x="871.1" y="2.9" width="2" height="1.5" fill="#f090c8"/><rect x="275.9" y="6.4" width="2.5" height="1.5" fill="#7a1a55"/><rect x="100.9" y="1.7" width="2.5" height="2" fill="#a02a70"/><rect x="747.5" y="6.7" width="1" height="2" fill="#b03078"/><rect x="690.7" y="8.8" width="2" height="2" fill="#f090c8"/><rect x="348.3" y="9.1" width="1.5" height="1" fill="#30101f"/><rect x="652.6" y="7.1" width="1" height="1.5" fill="#b03078"/><rect x="775.8" y="9.5" width="1.5" height="2" fill="#30101f"/><rect x="597.0" y="-0.4" width="3" height="1.5" fill="#f090c8"/><rect x="430.2" y="4.5" width="1.5" height="2" fill="#f090c8"/><rect x="330.2" y="-0.2" width="1" height="1.5" fill="#c8408f"/><rect x="826.3" y="-0.7" width="2" height="1" fill="#e060b0"/><rect x="455.6" y="-0.4" width="2.5" height="2" fill="#d04a98"/><rect x="284.7" y="4.7" width="2.5" height="1.5" fill="#1a0612"/><rect x="291.5" y="3.1" width="2" height="2" fill="#f090c8"/><rect x="524.5" y="0.3" width="3" height="2" fill="#e060b0"/><rect x="442.9" y="4.0" width="1.5" height="1" fill="#a02a70"/><rect x="331.6" y="3.4" width="1" height="2" fill="#c8408f"/><rect x="422.3" y="5.8" width="1" height="2" fill="#b03078"/><rect x="392.8" y="0.1" width="3" height="1.5" fill="#30101f"/><rect x="721.8" y="3.3" width="1.5" height="2" fill="#c8408f"/><rect x="200.4" y="9.6" width="2.5" height="1" fill="#d04a98"/><rect x="582.8" y="-0.1" width="2.5" height="1" fill="#f090c8"/><rect x="276.1" y="2.9" width="1.5" height="1.5" fill="#30101f"/><rect x="688.2" y="-0.9" width="1.5" height="2" fill="#d04a98"/><rect x="915.0" y="5.7" width="1.5" height="1" fill="#c8408f"/><rect x="832.8" y="5.6" width="1" height="2" fill="#f090c8"/><rect x="48.9" y="-0.3" width="3" height="1" fill="#30101f"/><rect x="778.8" y="7.6" width="1.5" height="2" fill="#1a0612"/><rect x="853.4" y="5.7" width="1.5" height="1" fill="#1a0612"/><rect x="735.1" y="4.1" width="3" height="2" fill="#7a1a55"/><rect x="552.8" y="1.8" width="1.5" height="2" fill="#1a0612"/><rect x="49.6" y="8.3" width="2" height="2" fill="#b03078"/><rect x="684.7" y="1.8" width="2" height="1" fill="#30101f"/><rect x="752.1" y="1.8" width="1.5" height="1" fill="#e060b0"/><rect x="685.5" y="7.5" width="1.5" height="1.5" fill="#d04a98"/><rect x="846.5" y="-0.4" width="1" height="1.5" fill="#e060b0"/><rect x="794.7" y="9.8" width="3" height="2" fill="#d04a98"/><rect x="130.0" y="4.5" width="1.5" height="2" fill="#f090c8"/><rect x="373.6" y="7.7" width="1.5" height="1" fill="#b03078"/><rect x="795.4" y="3.3" width="2.5" height="1.5" fill="#7a1a55"/><rect x="148.2" y="1.6" width="1" height="1" fill="#a02a70"/><rect x="539.6" y="0.5" width="2" height="1" fill="#d04a98"/><rect x="438.9" y="4.3" width="3" height="1.5" fill="#1a0612"/><rect x="864.5" y="4.7" width="1.5" height="1.5" fill="#30101f"/><rect x="132.4" y="1.0" width="1" height="1.5" fill="#d04a98"/><rect x="884.8" y="3.8" width="2" height="2" fill="#d04a98"/><rect x="307.0" y="7.5" width="2.5" height="2" fill="#b03078"/><rect x="425.7" y="9.0" width="3" height="1" fill="#c8408f"/><rect x="777.3" y="7.7" width="2" height="2" fill="#d04a98"/><rect x="871.1" y="6.4" width="1.5" height="2" fill="#c8408f"/><rect x="868.6" y="0.7" width="2" height="2" fill="#d04a98"/><rect x="723.8" y="6.1" width="1.5" height="1.5" fill="#b03078"/><rect x="502.7" y="3.8" width="1.5" height="1.5" fill="#e060b0"/><rect x="124.4" y="9.9" width="1" height="2" fill="#f090c8"/><rect x="738.0" y="4.3" width="2" height="1.5" fill="#30101f"/><rect x="819.1" y="3.2" width="3" height="1.5" fill="#1a0612"/><rect x="106.4" y="2.1" width="3" height="2" fill="#7a1a55"/><rect x="15.3" y="8.6" width="1" height="1.5" fill="#30101f"/><rect x="11.0" y="9.7" width="2" height="1.5" fill="#b03078"/><rect x="859.5" y="3.5" width="1" height="1" fill="#a02a70"/><rect x="54.4" y="8.7" width="1.5" height="1.5" fill="#a02a70"/><rect x="200.6" y="4.2" width="1" height="2" fill="#e060b0"/><rect x="866.5" y="5.6" width="1" height="1" fill="#d04a98"/><rect x="766.3" y="-0.5" width="2.5" height="2" fill="#d04a98"/><rect x="386.3" y="6.6" width="1.5" height="2" fill="#b03078"/><rect x="893.8" y="-0.5" width="1" height="1" fill="#e060b0"/><rect x="35.7" y="2.9" width="1.5" height="1" fill="#1a0612"/><rect x="148.3" y="1.2" width="3" height="1.5" fill="#a02a70"/><rect x="330.0" y="10.7" width="2.5" height="1.5" fill="#d04a98"/><rect x="374.3" y="4.4" width="2.5" height="1" fill="#b03078"/><rect x="151.5" y="9.7" width="2" height="2" fill="#c8408f"/><rect x="407.7" y="6.5" width="1" height="1.5" fill="#30101f"/><rect x="723.7" y="5.9" width="2.5" height="1.5" fill="#c8408f"/><rect x="549.9" y="3.0" width="2.5" height="2" fill="#b03078"/><rect x="786.4" y="10.0" width="3" height="2" fill="#b03078"/><rect x="454.5" y="7.3" width="1.5" height="2" fill="#c8408f"/><rect x="457.8" y="10.1" width="3" height="1" fill="#f090c8"/><rect x="378.9" y="7.0" width="3" height="1.5" fill="#d04a98"/><rect x="305.4" y="4.8" width="3" height="2" fill="#b03078"/><rect x="289.5" y="3.5" width="2" height="1" fill="#c8408f"/><rect x="906.6" y="7.3" width="2" height="2" fill="#30101f"/><rect x="240.0" y="6.3" width="1.5" height="2" fill="#30101f"/><rect x="447.2" y="2.3" width="1" height="1.5" fill="#c8408f"/><rect x="136.4" y="8.1" width="3" height="1.5" fill="#7a1a55"/><rect x="536.7" y="4.1" width="1" height="1" fill="#b03078"/><rect x="94.2" y="2.3" width="1" height="2" fill="#d04a98"/><rect x="404.2" y="7.7" width="2" height="1" fill="#1a0612"/><rect x="593.6" y="0.2" width="2.5" height="2" fill="#7a1a55"/><rect x="196.3" y="6.9" width="2" height="1.5" fill="#a02a70"/><rect x="841.7" y="10.3" width="3" height="1.5" fill="#7a1a55"/><rect x="417.4" y="9.4" width="2.5" height="2" fill="#1a0612"/><rect x="876.8" y="-0.4" width="1.5" height="2" fill="#7a1a55"/><rect x="49.0" y="10.9" width="3" height="2" fill="#b03078"/><rect x="321.7" y="9.2" width="1.5" height="1.5" fill="#30101f"/><rect x="30.4" y="4.7" width="1" height="1" fill="#c8408f"/><rect x="197.1" y="6.2" width="1" height="2" fill="#7a1a55"/><rect x="314.1" y="10.2" width="1.5" height="1" fill="#e060b0"/><rect x="590.2" y="9.1" width="2" height="1.5" fill="#b03078"/><rect x="149.9" y="10.2" width="2.5" height="1" fill="#7a1a55"/><rect x="237.5" y="-0.3" width="1.5" height="2" fill="#7a1a55"/><rect x="888.5" y="8.3" width="2.5" height="2" fill="#1a0612"/><rect x="194.2" y="4.0" width="2.5" height="1.5" fill="#c8408f"/><rect x="681.4" y="1.8" width="2.5" height="1.5" fill="#30101f"/><rect x="880.2" y="10.1" width="1.5" height="2" fill="#e060b0"/><rect x="507.0" y="3.9" width="1.5" height="1" fill="#1a0612"/><rect x="429.7" y="10.2" width="3" height="1.5" fill="#e060b0"/><rect x="506.9" y="8.1" width="3" height="1.5" fill="#b03078"/><rect x="313.7" y="0.1" width="2.5" height="1" fill="#b03078"/><rect x="456.3" y="2.4" width="2" height="1.5" fill="#30101f"/><rect x="163.1" y="8.2" width="2" height="1" fill="#1a0612"/><rect x="113.5" y="2.4" width="2" height="2" fill="#f090c8"/><rect x="439.9" y="10.2" width="1.5" height="2" fill="#b03078"/><rect x="329.7" y="6.3" width="2" height="1.5" fill="#a02a70"/><rect x="649.0" y="6.0" width="2.5" height="1" fill="#a02a70"/><rect x="506.1" y="1.5" width="3" height="2" fill="#e060b0"/><rect x="689.2" y="1.8" width="1" height="2" fill="#7a1a55"/><rect x="847.9" y="10.9" width="3" height="2" fill="#c8408f"/><rect x="243.9" y="10.7" width="1" height="1.5" fill="#f090c8"/><rect x="819.1" y="7.3" width="3" height="1.5" fill="#f090c8"/><rect x="825.8" y="6.1" width="1.5" height="1" fill="#a02a70"/><rect x="904.2" y="9.9" width="1.5" height="1" fill="#a02a70"/><rect x="852.8" y="2.2" width="3" height="1.5" fill="#d04a98"/><rect x="370.6" y="7.4" width="1" height="2" fill="#d04a98"/><rect x="101.1" y="8.0" width="2" height="2" fill="#b03078"/><rect x="391.5" y="9.4" width="1" height="1" fill="#c8408f"/><rect x="909.1" y="6.5" width="2.5" height="1" fill="#f090c8"/><rect x="664.4" y="5.6" width="2" height="1.5" fill="#7a1a55"/><rect x="497.3" y="1.0" width="1.5" height="1" fill="#e060b0"/><rect x="538.5" y="8.6" width="1.5" height="1.5" fill="#30101f"/><rect x="518.9" y="0.2" width="2.5" height="1.5" fill="#1a0612"/><rect x="497.4" y="-0.8" width="1" height="1" fill="#d04a98"/><rect x="128.5" y="10.1" width="1" height="1" fill="#f090c8"/><rect x="221.0" y="0.1" width="2.5" height="2" fill="#d04a98"/><rect x="392.9" y="4.7" width="1" height="1" fill="#c8408f"/><rect x="414.2" y="5.0" width="1" height="2" fill="#b03078"/><rect x="181.4" y="2.1" width="2" height="1" fill="#f090c8"/><rect x="593.7" y="4.1" width="2" height="1" fill="#30101f"/><rect x="712.8" y="4.4" width="1.5" height="1" fill="#7a1a55"/><rect x="395.2" y="10.2" width="1" height="2" fill="#30101f"/><rect x="392.4" y="1.0" width="1" height="1.5" fill="#e060b0"/><rect x="905.7" y="7.8" width="1.5" height="2" fill="#c8408f"/><rect x="260.7" y="-0.5" width="1" height="1" fill="#30101f"/><rect x="679.4" y="7.6" width="3" height="1.5" fill="#b03078"/><rect x="209.5" y="1.5" width="2" height="2" fill="#1a0612"/><rect x="83.7" y="9.8" width="1" height="2" fill="#a02a70"/><rect x="605.6" y="0.2" width="2.5" height="1" fill="#30101f"/><rect x="629.0" y="10.9" width="2" height="1" fill="#7a1a55"/><rect x="605.2" y="3.0" width="1" height="1.5" fill="#d04a98"/><rect x="629.9" y="4.2" width="1.5" height="1" fill="#e060b0"/><rect x="52.0" y="1.3" width="2" height="2" fill="#e060b0"/><rect x="349.9" y="7.2" width="2" height="1" fill="#e060b0"/><rect x="612.9" y="4.9" width="2.5" height="1.5" fill="#e060b0"/><rect x="854.5" y="8.8" width="2.5" height="1" fill="#b03078"/><rect x="61.4" y="4.2" width="1" height="2" fill="#b03078"/><rect x="529.0" y="10.7" width="1" height="2" fill="#e060b0"/><rect x="103.3" y="2.9" width="1" height="1" fill="#7a1a55"/><rect x="318.4" y="7.3" width="2" height="1.5" fill="#7a1a55"/><rect x="148.0" y="4.3" width="1.5" height="1" fill="#b03078"/><rect x="83.7" y="7.7" width="1.5" height="2" fill="#b03078"/><rect x="603.0" y="2.1" width="1" height="1" fill="#d04a98"/><rect x="84.1" y="1.7" width="1.5" height="1" fill="#f090c8"/><rect x="77.1" y="2.7" width="3" height="1.5" fill="#30101f"/><rect x="791.6" y="6.1" width="3" height="2" fill="#a02a70"/><rect x="284.7" y="1.5" width="2" height="1" fill="#f090c8"/><rect x="324.6" y="5.7" width="1.5" height="2" fill="#7a1a55"/><rect x="603.5" y="0.5" width="1" height="1.5" fill="#d04a98"/><rect x="607.7" y="1.2" width="3" height="1.5" fill="#7a1a55"/><rect x="108.8" y="6.5" width="2.5" height="1.5" fill="#30101f"/><rect x="435.9" y="7.5" width="3" height="2" fill="#d04a98"/><rect x="497.8" y="2.5" width="1" height="1.5" fill="#1a0612"/><rect x="293.4" y="7.2" width="2.5" height="1.5" fill="#7a1a55"/><rect x="416.3" y="0.0" width="2" height="2" fill="#a02a70"/><rect x="755.8" y="10.8" width="2.5" height="2" fill="#7a1a55"/><rect x="581.2" y="7.3" width="2" height="2" fill="#c8408f"/><rect x="312.7" y="3.9" width="2.5" height="2" fill="#30101f"/><rect x="814.3" y="9.4" width="2" height="1" fill="#f090c8"/><rect x="308.3" y="0.3" width="1.5" height="1.5" fill="#e060b0"/><rect x="337.9" y="2.2" width="2.5" height="1" fill="#b03078"/><rect x="819.3" y="9.2" width="2.5" height="1.5" fill="#d04a98"/><rect x="142.2" y="0.8" width="1.5" height="2" fill="#b03078"/><rect x="322.3" y="-0.3" width="1.5" height="1.5" fill="#c8408f"/><rect x="779.3" y="9.7" width="2.5" height="1.5" fill="#a02a70"/><rect x="139.4" y="8.4" width="3" height="1" fill="#e060b0"/><rect x="826.1" y="4.3" width="2.5" height="2" fill="#7a1a55"/><rect x="902.9" y="3.7" width="1.5" height="1.5" fill="#c8408f"/><rect x="673.2" y="0.4" width="2" height="1.5" fill="#b03078"/><rect x="621.8" y="6.5" width="1.5" height="1" fill="#c8408f"/><rect x="530.2" y="5.9" width="1.5" height="1.5" fill="#e060b0"/><rect x="183.2" y="9.3" width="1.5" height="1" fill="#1a0612"/><rect x="536.2" y="5.9" width="2" height="1" fill="#c8408f"/><rect x="523.0" y="5.2" width="3" height="1" fill="#30101f"/><rect x="421.1" y="1.8" width="2.5" height="1.5" fill="#d04a98"/><rect x="837.4" y="-0.8" width="1.5" height="1" fill="#f090c8"/><rect x="902.5" y="1.9" width="2.5" height="1" fill="#f090c8"/><rect x="537.3" y="3.5" width="1" height="2" fill="#30101f"/><rect x="741.6" y="2.2" width="2.5" height="1.5" fill="#c8408f"/><rect x="49.8" y="3.6" width="1.5" height="2" fill="#b03078"/><rect x="711.8" y="9.1" width="3" height="1.5" fill="#b03078"/><rect x="731.7" y="0.3" width="2" height="2" fill="#1a0612"/><rect x="859.0" y="9.5" width="2" height="1.5" fill="#a02a70"/><rect x="634.2" y="-0.2" width="1" height="1" fill="#f090c8"/><rect x="4.4" y="3.9" width="2.5" height="1.5" fill="#f090c8"/><rect x="472.2" y="10.8" width="1.5" height="1" fill="#30101f"/><rect x="483.0" y="0.4" width="2" height="2" fill="#a02a70"/><rect x="201.7" y="3.7" width="2" height="2" fill="#30101f"/><rect x="515.5" y="2.4" width="1" height="2" fill="#f090c8"/><rect x="771.7" y="3.4" width="3" height="2" fill="#f090c8"/><rect x="125.9" y="7.1" width="1" height="1.5" fill="#b03078"/><rect x="381.9" y="10.5" width="2" height="1" fill="#d04a98"/><rect x="3.4" y="11.0" width="1.5" height="2" fill="#30101f"/><rect x="408.4" y="3.9" width="1.5" height="1" fill="#1a0612"/><rect x="150.6" y="10.0" width="1" height="1" fill="#d04a98"/><rect x="201.0" y="10.5" width="2.5" height="2" fill="#c8408f"/><rect x="454.8" y="4.7" width="1.5" height="2" fill="#b03078"/><rect x="61.7" y="1.1" width="1.5" height="1.5" fill="#30101f"/><rect x="124.6" y="6.4" width="1.5" height="2" fill="#30101f"/><rect x="795.7" y="2.5" width="3" height="1" fill="#1a0612"/><rect x="670.4" y="0.3" width="2" height="1.5" fill="#7a1a55"/><rect x="620.9" y="5.6" width="3" height="2" fill="#a02a70"/><rect x="614.8" y="7.9" width="2" height="2" fill="#b03078"/><rect x="689.1" y="3.4" width="2.5" height="2" fill="#b03078"/><rect x="752.3" y="6.8" width="1" height="1" fill="#c8408f"/><rect x="541.6" y="7.3" width="3" height="2" fill="#b03078"/><rect x="244.8" y="9.1" width="1.5" height="2" fill="#c8408f"/><rect x="14.4" y="9.7" width="2.5" height="1" fill="#1a0612"/><rect x="487.5" y="9.3" width="1.5" height="1.5" fill="#f090c8"/><rect x="552.0" y="0.6" width="2" height="1" fill="#e060b0"/><rect x="20.6" y="7.6" width="1" height="1" fill="#7a1a55"/><rect x="614.5" y="2.6" width="1" height="1" fill="#1a0612"/><rect x="551.7" y="10.6" width="3" height="1" fill="#c8408f"/><rect x="669.9" y="1.7" width="1" height="2" fill="#30101f"/><rect x="442.9" y="6.2" width="1.5" height="1.5" fill="#30101f"/><rect x="424.6" y="8.4" width="2.5" height="1" fill="#a02a70"/><rect x="257.3" y="7.9" width="3" height="1" fill="#b03078"/><rect x="636.0" y="3.8" width="1.5" height="1" fill="#a02a70"/><rect x="402.4" y="8.5" width="2.5" height="2" fill="#f090c8"/><rect x="458.7" y="-0.7" width="2" height="1.5" fill="#a02a70"/><rect x="146.4" y="5.0" width="2.5" height="1" fill="#30101f"/><rect x="699.4" y="4.1" width="1.5" height="1.5" fill="#30101f"/><rect x="191.8" y="10.4" width="1.5" height="1.5" fill="#e060b0"/><rect x="241.3" y="3.2" width="1" height="1.5" fill="#7a1a55"/><rect x="344.8" y="5.9" width="1.5" height="1.5" fill="#d04a98"/><rect x="738.8" y="9.5" width="2" height="1.5" fill="#b03078"/><rect x="505.2" y="6.2" width="1.5" height="2" fill="#b03078"/><rect x="267.2" y="9.4" width="2.5" height="1.5" fill="#d04a98"/><rect x="763.5" y="7.6" width="2.5" height="1" fill="#e060b0"/><rect x="142.9" y="1.1" width="1.5" height="1.5" fill="#a02a70"/><rect x="589.6" y="4.2" width="2" height="1" fill="#e060b0"/><rect x="167.4" y="5.9" width="1.5" height="1" fill="#1a0612"/><rect x="536.5" y="1.3" width="3" height="1.5" fill="#e060b0"/><rect x="15.3" y="10.2" width="1.5" height="1.5" fill="#c8408f"/><rect x="813.9" y="6.8" width="1" height="2" fill="#d04a98"/><rect x="199.1" y="8.4" width="2" height="2" fill="#a02a70"/><rect x="859.6" y="1.1" width="2" height="1.5" fill="#e060b0"/><rect x="439.1" y="-0.2" width="1.5" height="2" fill="#7a1a55"/><rect x="140.3" y="5.6" width="1" height="1" fill="#c8408f"/><rect x="180.6" y="1.5" width="2" height="1.5" fill="#e060b0"/><rect x="240.5" y="1.2" width="1" height="1.5" fill="#1a0612"/><rect x="204.2" y="1.9" width="2.5" height="1" fill="#a02a70"/><rect x="790.0" y="0.4" width="1" height="1.5" fill="#1a0612"/><rect x="714.0" y="10.9" width="1.5" height="1.5" fill="#c8408f"/><rect x="286.8" y="3.7" width="3" height="1.5" fill="#a02a70"/><rect x="285.9" y="-0.1" width="3" height="2" fill="#1a0612"/><rect x="619.3" y="6.0" width="3" height="1.5" fill="#7a1a55"/><rect x="163.0" y="3.9" width="2.5" height="1" fill="#c8408f"/><rect x="512.1" y="4.5" width="3" height="1" fill="#30101f"/><rect x="465.4" y="0.4" width="2" height="1.5" fill="#c8408f"/><rect x="12.2" y="6.5" width="1.5" height="1" fill="#1a0612"/><rect x="748.3" y="9.5" width="2.5" height="2" fill="#a02a70"/><rect x="130.6" y="3.7" width="1" height="2" fill="#7a1a55"/><rect x="20.0" y="4.3" width="2" height="2" fill="#a02a70"/><rect x="308.1" y="0.5" width="1" height="1.5" fill="#c8408f"/><rect x="723.5" y="2.7" width="3" height="2" fill="#b03078"/><rect x="105.8" y="7.8" width="1" height="1.5" fill="#c8408f"/><rect x="713.0" y="10.0" width="1.5" height="2" fill="#d04a98"/><rect x="582.6" y="7.9" width="1" height="1" fill="#30101f"/><rect x="424.5" y="4.8" width="2.5" height="1.5" fill="#e060b0"/><rect x="398.3" y="1.7" width="1.5" height="1.5" fill="#1a0612"/><rect x="591.3" y="9.0" width="2.5" height="2" fill="#30101f"/><rect x="255.1" y="0.3" width="1" height="2" fill="#1a0612"/><rect x="240.2" y="10.1" width="1.5" height="1.5" fill="#d04a98"/><rect x="698.0" y="2.3" width="1.5" height="2" fill="#30101f"/><rect x="156.7" y="0.8" width="2" height="1" fill="#e060b0"/><rect x="513.2" y="4.0" width="1" height="2" fill="#1a0612"/><rect x="607.1" y="8.5" width="3" height="1.5" fill="#e060b0"/><rect x="93.6" y="8.6" width="2.5" height="1.5" fill="#30101f"/><rect x="655.0" y="-0.8" width="2.5" height="1.5" fill="#b03078"/><rect x="730.6" y="0.1" width="1" height="1" fill="#30101f"/><rect x="203.5" y="-0.0" width="1" height="2" fill="#a02a70"/><rect x="553.0" y="-0.2" width="2" height="1.5" fill="#1a0612"/><rect x="230.5" y="1.9" width="1" height="2" fill="#e060b0"/><rect x="497.0" y="6.9" width="2" height="2" fill="#c8408f"/><rect x="789.9" y="0.2" width="1" height="2" fill="#a02a70"/><rect x="537.7" y="7.7" width="2" height="2" fill="#1a0612"/><rect x="264.8" y="5.9" width="1" height="1.5" fill="#1a0612"/><rect x="535.9" y="2.6" width="2" height="2" fill="#30101f"/><rect x="78.3" y="8.6" width="2.5" height="1.5" fill="#a02a70"/><rect x="337.4" y="2.8" width="3" height="1.5" fill="#7a1a55"/><rect x="342.1" y="3.9" width="3" height="1.5" fill="#a02a70"/><rect x="906.0" y="10.3" width="2" height="2" fill="#a02a70"/><rect x="123.4" y="5.6" width="1.5" height="2" fill="#c8408f"/><rect x="72.8" y="9.4" width="1.5" height="1.5" fill="#7a1a55"/><rect x="631.2" y="10.2" width="2.5" height="1.5" fill="#b03078"/><rect x="652.9" y="0.2" width="1" height="1" fill="#1a0612"/><rect x="587.4" y="5.3" width="2.5" height="1" fill="#a02a70"/><rect x="876.6" y="3.7" width="2.5" height="1" fill="#f090c8"/><rect x="609.9" y="5.7" width="2" height="1.5" fill="#d04a98"/><rect x="471.6" y="1.3" width="1.5" height="2" fill="#f090c8"/><rect x="908.2" y="4.6" width="1" height="1" fill="#e060b0"/><rect x="654.2" y="10.3" width="2" height="1.5" fill="#1a0612"/><rect x="434.9" y="2.7" width="2" height="1" fill="#30101f"/><rect x="612.6" y="1.0" width="1.5" height="2" fill="#30101f"/><rect x="194.0" y="3.0" width="1" height="2" fill="#b03078"/><rect x="131.3" y="5.6" width="2" height="1.5" fill="#7a1a55"/><rect x="75.2" y="1.5" width="1" height="1.5" fill="#a02a70"/><rect x="347.6" y="-0.8" width="2.5" height="1" fill="#e060b0"/><rect x="878.7" y="1.7" width="2" height="1" fill="#c8408f"/><rect x="543.1" y="4.5" width="2.5" height="2" fill="#30101f"/><rect x="82.6" y="4.4" width="1.5" height="1" fill="#f090c8"/><rect x="525.1" y="-0.6" width="1" height="2" fill="#c8408f"/><rect x="575.2" y="6.0" width="2.5" height="2" fill="#b03078"/><rect x="743.8" y="0.9" width="3" height="1.5" fill="#7a1a55"/><rect x="316.3" y="0.9" width="1" height="2" fill="#f090c8"/><rect x="548.3" y="10.1" width="2" height="2" fill="#f090c8"/><rect x="43.4" y="5.0" width="3" height="1" fill="#c8408f"/><rect x="305.0" y="7.5" width="2" height="2" fill="#7a1a55"/><rect x="857.6" y="8.3" width="2.5" height="1.5" fill="#1a0612"/><rect x="427.4" y="5.8" width="1" height="2" fill="#b03078"/><rect x="740.2" y="2.0" width="1.5" height="1" fill="#b03078"/><rect x="191.3" y="7.0" width="1.5" height="1.5" fill="#1a0612"/><rect x="441.1" y="-0.4" width="1.5" height="1" fill="#b03078"/><rect x="408.1" y="-0.2" width="1" height="1" fill="#1a0612"/><rect x="680.1" y="5.1" width="1" height="1.5" fill="#a02a70"/><rect x="777.5" y="8.4" width="3" height="1.5" fill="#a02a70"/><rect x="310.5" y="6.6" width="2.5" height="1.5" fill="#c8408f"/><rect x="590.7" y="5.1" width="2" height="1" fill="#d04a98"/><rect x="185.3" y="3.0" width="1" height="1" fill="#e060b0"/><rect x="770.7" y="9.2" width="2.5" height="2" fill="#1a0612"/><rect x="884.0" y="9.0" width="3" height="1.5" fill="#f090c8"/><rect x="11.5" y="3.6" width="2" height="1.5" fill="#e060b0"/><rect x="457.2" y="5.3" width="1" height="1.5" fill="#e060b0"/><rect x="370.0" y="0.2" width="2.5" height="2" fill="#c8408f"/><rect x="106.0" y="6.2" width="2" height="1" fill="#d04a98"/><rect x="608.5" y="2.3" width="1" height="1.5" fill="#a02a70"/><rect x="321.5" y="4.6" width="1" height="1.5" fill="#c8408f"/><rect x="303.6" y="5.5" width="3" height="1.5" fill="#c8408f"/><rect x="393.9" y="9.6" width="3" height="1" fill="#1a0612"/><rect x="278.1" y="9.8" width="1" height="2" fill="#7a1a55"/><rect x="866.5" y="-0.8" width="2" height="2" fill="#c8408f"/><rect x="700.1" y="1.9" width="1.5" height="1.5" fill="#a02a70"/><rect x="670.5" y="9.0" width="3" height="2" fill="#f090c8"/><rect x="562.3" y="0.7" width="1" height="1" fill="#1a0612"/><rect x="472.2" y="3.6" width="2" height="1" fill="#1a0612"/><rect x="160.1" y="5.7" width="2" height="1.5" fill="#c8408f"/><rect x="483.0" y="8.6" width="1" height="1" fill="#b03078"/><rect x="767.1" y="-1.0" width="3" height="2" fill="#e060b0"/><rect x="298.7" y="-0.1" width="2.5" height="1" fill="#7a1a55"/><rect x="495.7" y="-0.5" width="1" height="1.5" fill="#30101f"/><rect x="687.1" y="4.8" width="1" height="1" fill="#b03078"/><rect x="741.5" y="1.7" width="1" height="1" fill="#7a1a55"/><rect x="89.3" y="8.2" width="2.5" height="2" fill="#30101f"/><rect x="761.7" y="10.8" width="2" height="1" fill="#b03078"/><rect x="286.9" y="7.2" width="1.5" height="2" fill="#1a0612"/><rect x="252.2" y="2.0" width="3" height="1" fill="#b03078"/><rect x="562.4" y="3.5" width="1.5" height="1" fill="#c8408f"/><rect x="616.0" y="0.5" width="2" height="1" fill="#7a1a55"/><rect x="295.6" y="7.9" width="2.5" height="2" fill="#b03078"/><rect x="405.1" y="0.1" width="2.5" height="1" fill="#b03078"/><rect x="189.7" y="10.2" width="1" height="1" fill="#d04a98"/><rect x="76.4" y="2.0" width="1" height="1.5" fill="#1a0612"/><rect x="106.8" y="3.8" width="1.5" height="1" fill="#d04a98"/><rect x="653.5" y="8.4" width="3" height="1.5" fill="#b03078"/><rect x="802.1" y="-0.2" width="2.5" height="1.5" fill="#7a1a55"/><rect x="676.4" y="1.6" width="2" height="1.5" fill="#7a1a55"/><rect x="171.7" y="9.5" width="2.5" height="1.5" fill="#d04a98"/><rect x="569.6" y="0.1" width="1" height="1.5" fill="#e060b0"/><rect x="518.6" y="9.4" width="2" height="1.5" fill="#7a1a55"/><rect x="361.5" y="1.8" width="1.5" height="2" fill="#d04a98"/><rect x="174.6" y="-0.9" width="2.5" height="1.5" fill="#d04a98"/><rect x="586.8" y="5.7" width="1" height="1.5" fill="#b03078"/><rect x="281.6" y="5.2" width="2" height="1.5" fill="#1a0612"/><rect x="759.9" y="2.5" width="3" height="1.5" fill="#b03078"/><rect x="158.5" y="2.0" width="3" height="1" fill="#d04a98"/><rect x="649.0" y="8.6" width="2" height="2" fill="#1a0612"/><rect x="342.4" y="8.9" width="1.5" height="1.5" fill="#c8408f"/><rect x="428.6" y="3.9" width="1.5" height="2" fill="#e060b0"/><rect x="81.4" y="10.7" width="1.5" height="1.5" fill="#d04a98"/><rect x="185.6" y="3.5" width="2.5" height="2" fill="#d04a98"/><rect x="334.5" y="0.3" width="1" height="1.5" fill="#30101f"/><rect x="105.1" y="8.0" width="2.5" height="2" fill="#f090c8"/><rect x="521.9" y="6.6" width="1.5" height="2" fill="#30101f"/><rect x="496.6" y="4.1" width="2" height="1.5" fill="#f090c8"/><rect x="914.5" y="7.8" width="1" height="1.5" fill="#30101f"/><rect x="189.4" y="-0.4" width="1.5" height="1" fill="#f090c8"/><rect x="272.7" y="-0.1" width="1.5" height="1" fill="#1a0612"/><rect x="714.0" y="4.3" width="3" height="1.5" fill="#30101f"/><rect x="70.2" y="7.8" width="1.5" height="2" fill="#a02a70"/><rect x="630.5" y="3.6" width="3" height="2" fill="#7a1a55"/><rect x="330.7" y="0.7" width="2" height="2" fill="#d04a98"/><rect x="205.3" y="-0.5" width="2.5" height="1.5" fill="#c8408f"/><rect x="788.0" y="3.8" width="2" height="1.5" fill="#1a0612"/><rect x="900.9" y="2.2" width="2.5" height="1" fill="#b03078"/><rect x="746.3" y="4.4" width="2" height="1" fill="#d04a98"/><rect x="697.7" y="-0.2" width="2" height="1.5" fill="#7a1a55"/><rect x="487.2" y="6.7" width="1" height="2" fill="#f090c8"/><rect x="351.2" y="6.4" width="2" height="1" fill="#c8408f"/><rect x="406.8" y="9.4" width="2" height="1.5" fill="#1a0612"/><rect x="212.6" y="7.5" width="2" height="1" fill="#f090c8"/><rect x="513.4" y="4.7" width="2" height="2" fill="#d04a98"/><rect x="75.9" y="9.4" width="3" height="1" fill="#30101f"/><rect x="633.6" y="6.6" width="2" height="1.5" fill="#a02a70"/><rect x="398.3" y="6.8" width="3" height="1" fill="#1a0612"/><rect x="899.1" y="4.6" width="1.5" height="1.5" fill="#1a0612"/><rect x="711.4" y="7.3" width="2" height="2" fill="#b03078"/><rect x="582.3" y="4.3" width="3" height="2" fill="#a02a70"/><rect x="260.8" y="4.9" width="1.5" height="2" fill="#a02a70"/><rect x="903.9" y="3.8" width="1" height="1" fill="#7a1a55"/><rect x="318.9" y="7.8" width="3" height="1" fill="#b03078"/><rect x="378.7" y="2.4" width="2" height="2" fill="#b03078"/><rect x="881.5" y="2.6" width="3" height="1.5" fill="#7a1a55"/><rect x="587.8" y="4.5" width="2" height="2" fill="#30101f"/><rect x="314.4" y="6.9" width="1" height="1" fill="#f090c8"/><rect x="209.9" y="8.4" width="2.5" height="1.5" fill="#f090c8"/><rect x="21.9" y="9.0" width="2" height="1.5" fill="#c8408f"/><rect x="469.3" y="10.4" width="1.5" height="1" fill="#f090c8"/><rect x="106.8" y="3.4" width="1" height="2" fill="#b03078"/><rect x="390.9" y="0.0" width="2.5" height="1.5" fill="#7a1a55"/><rect x="335.0" y="5.2" width="1" height="1.5" fill="#d04a98"/><rect x="840.0" y="8.5" width="3" height="1" fill="#1a0612"/><rect x="456.4" y="9.9" width="1.5" height="1.5" fill="#e060b0"/><rect x="215.5" y="2.0" width="1.5" height="1" fill="#a02a70"/><rect x="641.0" y="1.9" width="3" height="2" fill="#1a0612"/><rect x="320.7" y="5.0" width="1" height="1" fill="#a02a70"/><rect x="389.1" y="10.8" width="1.5" height="1" fill="#f090c8"/><rect x="37.7" y="2.3" width="1" height="1.5" fill="#b03078"/><rect x="469.5" y="9.7" width="1" height="2" fill="#b03078"/><rect x="787.8" y="0.5" width="1.5" height="2" fill="#f090c8"/><rect x="430.3" y="10.2" width="2" height="1.5" fill="#a02a70"/><rect x="876.2" y="3.1" width="2.5" height="1.5" fill="#a02a70"/><rect x="182.1" y="5.0" width="1" height="2" fill="#1a0612"/><rect x="708.4" y="8.0" width="3" height="1" fill="#f090c8"/><rect x="876.9" y="0.2" width="3" height="2" fill="#f090c8"/><rect x="331.0" y="-0.1" width="1" height="2" fill="#c8408f"/><rect x="271.8" y="6.5" width="2.5" height="1.5" fill="#7a1a55"/><rect x="743.3" y="2.6" width="3" height="1" fill="#a02a70"/><rect x="447.7" y="-0.0" width="2" height="2" fill="#d04a98"/><rect x="172.2" y="7.7" width="1" height="2" fill="#e060b0"/><rect x="483.6" y="9.2" width="1" height="2" fill="#b03078"/><rect x="14.5" y="10.1" width="2.5" height="2" fill="#7a1a55"/><rect x="251.8" y="-0.6" width="3" height="1.5" fill="#30101f"/><rect x="37.6" y="0.6" width="1.5" height="2" fill="#a02a70"/><rect x="222.5" y="-0.7" width="3" height="1.5" fill="#b03078"/><rect x="445.4" y="3.3" width="1" height="1.5" fill="#d04a98"/><rect x="638.1" y="5.1" width="1" height="1.5" fill="#c8408f"/><rect x="370.8" y="0.6" width="2.5" height="1" fill="#b03078"/><rect x="711.4" y="3.8" width="1.5" height="2" fill="#d04a98"/><rect x="254.4" y="0.0" width="1" height="1.5" fill="#f090c8"/><rect x="521.4" y="9.7" width="3" height="2" fill="#30101f"/><rect x="167.6" y="5.2" width="1.5" height="1" fill="#e060b0"/><rect x="300.6" y="2.8" width="1" height="1" fill="#d04a98"/><rect x="165.9" y="0.1" width="2.5" height="1.5" fill="#a02a70"/><rect x="694.1" y="2.6" width="1.5" height="1" fill="#30101f"/><rect x="623.4" y="4.6" width="2.5" height="1" fill="#c8408f"/><rect x="314.8" y="8.9" width="2" height="1" fill="#a02a70"/><rect x="403.4" y="0.4" width="2" height="2" fill="#30101f"/><rect x="713.3" y="5.2" width="3" height="1" fill="#c8408f"/><rect x="600.2" y="6.1" width="2.5" height="2" fill="#d04a98"/><rect x="523.9" y="0.5" width="2.5" height="2" fill="#d04a98"/><rect x="61.3" y="1.9" width="3" height="1.5" fill="#30101f"/><rect x="357.9" y="4.1" width="2" height="1.5" fill="#e060b0"/><rect x="403.1" y="2.9" width="1" height="1.5" fill="#1a0612"/><rect x="410.7" y="6.1" width="2" height="1" fill="#a02a70"/><rect x="517.2" y="0.8" width="1" height="2" fill="#7a1a55"/><rect x="796.2" y="7.1" width="1" height="1" fill="#a02a70"/><rect x="410.2" y="8.9" width="2.5" height="1.5" fill="#d04a98"/><rect x="106.8" y="1.2" width="2" height="1" fill="#f090c8"/><rect x="543.3" y="10.8" width="2.5" height="1" fill="#c8408f"/><rect x="388.5" y="1.6" width="2.5" height="2" fill="#1a0612"/><rect x="721.2" y="10.2" width="3" height="1" fill="#e060b0"/><rect x="636.8" y="-0.9" width="2.5" height="1" fill="#30101f"/><rect x="849.7" y="7.8" width="1" height="2" fill="#a02a70"/><rect x="402.2" y="1.6" width="2" height="1" fill="#1a0612"/><rect x="559.9" y="9.1" width="3" height="1.5" fill="#e060b0"/><rect x="299.6" y="6.3" width="1" height="1.5" fill="#d04a98"/><rect x="856.6" y="1.1" width="3" height="1.5" fill="#c8408f"/><rect x="409.9" y="2.9" width="1.5" height="1" fill="#7a1a55"/><rect x="490.3" y="0.8" width="3" height="1.5" fill="#7a1a55"/><rect x="834.6" y="7.2" width="2.5" height="2" fill="#b03078"/><rect x="268.3" y="7.4" width="1.5" height="2" fill="#b03078"/><rect x="537.5" y="4.3" width="1.5" height="2" fill="#f090c8"/><rect x="158.7" y="8.8" width="2" height="1.5" fill="#1a0612"/><rect x="897.4" y="0.9" width="2" height="1" fill="#d04a98"/><rect x="756.1" y="6.7" width="1.5" height="2" fill="#f090c8"/><rect x="624.0" y="3.6" width="2" height="1" fill="#b03078"/><rect x="810.1" y="3.3" width="2.5" height="2" fill="#30101f"/><rect x="546.5" y="0.6" width="2" height="2" fill="#30101f"/><rect x="242.6" y="7.1" width="2.5" height="1" fill="#e060b0"/><rect x="880.2" y="0.1" width="1" height="1.5" fill="#30101f"/><rect x="456.9" y="6.2" width="2" height="1.5" fill="#f090c8"/><rect x="619.6" y="7.4" width="1" height="2" fill="#e060b0"/><rect x="524.0" y="-0.7" width="3" height="1.5" fill="#30101f"/><rect x="71.5" y="6.5" width="2.5" height="1" fill="#a02a70"/><rect x="447.2" y="5.5" width="2" height="1.5" fill="#c8408f"/><rect x="776.5" y="2.7" width="1" height="1.5" fill="#f090c8"/><rect x="715.9" y="5.6" width="1" height="2" fill="#a02a70"/><rect x="871.1" y="9.2" width="3" height="2" fill="#f090c8"/><rect x="258.1" y="2.3" width="1" height="1" fill="#c8408f"/><rect x="77.7" y="3.6" width="3" height="1" fill="#d04a98"/><rect x="310.8" y="2.2" width="1.5" height="2" fill="#30101f"/><rect x="467.2" y="1.2" width="1" height="2" fill="#b03078"/><rect x="28.1" y="3.4" width="3" height="1.5" fill="#b03078"/><rect x="506.6" y="7.7" width="3" height="1.5" fill="#b03078"/><rect x="38.4" y="9.0" width="1" height="2" fill="#f090c8"/><rect x="765.6" y="-0.7" width="1" height="1" fill="#b03078"/><rect x="278.5" y="8.8" width="1" height="2" fill="#b03078"/><rect x="726.5" y="3.9" width="1.5" height="2" fill="#7a1a55"/><rect x="292.1" y="0.6" width="1.5" height="1.5" fill="#d04a98"/><rect x="165.0" y="2.6" width="1.5" height="2" fill="#f090c8"/><rect x="505.2" y="3.8" width="1" height="2" fill="#f090c8"/><rect x="554.6" y="4.5" width="1" height="2" fill="#30101f"/><rect x="720.6" y="5.9" width="1" height="2" fill="#7a1a55"/><rect x="557.7" y="0.8" width="2" height="1.5" fill="#d04a98"/><rect x="17.3" y="0.2" width="1.5" height="2" fill="#d04a98"/><rect x="728.4" y="9.6" width="2" height="1" fill="#b03078"/><rect x="684.7" y="2.3" width="1" height="1.5" fill="#f090c8"/><rect x="314.1" y="0.8" width="2.5" height="1.5" fill="#c8408f"/><rect x="310.8" y="2.9" width="3" height="1" fill="#f090c8"/><rect x="807.7" y="3.2" width="3" height="1.5" fill="#f090c8"/><rect x="695.5" y="5.7" width="2" height="1.5" fill="#7a1a55"/><rect x="126.2" y="-0.2" width="2" height="2" fill="#e060b0"/><rect x="634.8" y="6.9" width="2.5" height="1" fill="#c8408f"/><rect x="741.1" y="5.3" width="3" height="2" fill="#b03078"/><rect x="375.4" y="5.7" width="1" height="1" fill="#a02a70"/><rect x="94.2" y="0.7" width="2.5" height="2" fill="#c8408f"/><rect x="851.6" y="-0.4" width="1" height="2" fill="#a02a70"/><rect x="690.0" y="10.1" width="2.5" height="2" fill="#b03078"/><rect x="143.0" y="5.3" width="3" height="1.5" fill="#1a0612"/><rect x="740.1" y="-0.9" width="1.5" height="2" fill="#f090c8"/><rect x="278.3" y="7.8" width="2.5" height="1" fill="#f090c8"/><rect x="399.1" y="0.5" width="3" height="1.5" fill="#b03078"/><rect x="514.9" y="8.7" width="3" height="1.5" fill="#c8408f"/><rect x="651.3" y="10.6" width="2.5" height="2" fill="#30101f"/><rect x="136.2" y="3.1" width="2.5" height="1.5" fill="#c8408f"/><rect x="593.5" y="-0.5" width="1" height="1.5" fill="#e060b0"/><rect x="80.9" y="3.8" width="1.5" height="1.5" fill="#1a0612"/><rect x="592.5" y="4.3" width="3" height="2" fill="#1a0612"/><rect x="530.7" y="5.4" width="3" height="1.5" fill="#1a0612"/><rect x="892.6" y="10.5" width="1.5" height="1.5" fill="#e060b0"/><rect x="378.2" y="5.1" width="1.5" height="2" fill="#d04a98"/><rect x="841.3" y="7.0" width="1.5" height="1" fill="#a02a70"/><rect x="219.9" y="3.1" width="2.5" height="1.5" fill="#7a1a55"/><rect x="51.7" y="5.3" width="2" height="2" fill="#30101f"/><rect x="356.5" y="7.7" width="3" height="2" fill="#b03078"/><rect x="431.1" y="4.6" width="2" height="1.5" fill="#c8408f"/><rect x="89.2" y="10.4" width="2" height="1" fill="#30101f"/><rect x="804.3" y="9.2" width="2.5" height="1" fill="#a02a70"/><rect x="248.1" y="7.9" width="3" height="1" fill="#f090c8"/><rect x="5.7" y="3.2" width="2" height="1.5" fill="#e060b0"/><rect x="865.4" y="9.6" width="2" height="2" fill="#f090c8"/><rect x="746.6" y="0.7" width="1" height="2" fill="#e060b0"/><rect x="422.5" y="10.8" width="2" height="1" fill="#30101f"/><rect x="95.1" y="3.5" width="2.5" height="2" fill="#7a1a55"/><rect x="875.6" y="2.0" width="1" height="1" fill="#30101f"/><rect x="241.4" y="5.7" width="2" height="1" fill="#30101f"/><rect x="854.4" y="10.4" width="3" height="1.5" fill="#c8408f"/></svg>
<div style="left:94px;top:0px;width:721px;height:180px;background:#333;"></div>
<div style="left:93px;top:0px;width:723px;height:31px;border:1px solid #9c9c9c;border-bottom:0;box-sizing:border-box;"></div>
<div style="left:94px;top:1px;width:721px;height:30px;background:#fff;"></div>
<svg style="position:absolute;left:102px;top:7px" width="16" height="16"><defs><linearGradient id="dg102" x1="0" y1="0" x2="1" y2="1"><stop offset="0" stop-color="#f5d030"/><stop offset=".5" stop-color="#eca425"/><stop offset="1" stop-color="#d8681a"/></linearGradient></defs><rect width="16" height="16" fill="url(#dg102)"/><path fill-rule="evenodd" fill="#080808" d="M1.8 3.2 H5.6 Q10.2 3.2 10.2 8.1 Q10.2 13.1 5.6 13.1 H1.8 Z M4.4 5.6 H5.4 Q7.5 5.6 7.5 8.1 Q7.5 10.7 5.4 10.7 H4.4 Z"/><ellipse cx="11.6" cy="10.8" rx="2.6" ry="2.8" fill="#080808"/><rect x="10.2" y="9.3" width="2.8" height="0.9" fill="#e49a30"/><rect x="10.6" y="11.5" width="3.4" height="0.8" fill="#e49a30"/><circle cx="11.6" cy="3.4" r="1.4" fill="#080808"/></svg>
<div class="t" style="left:123.30px;top:8.24px;font-size:12px;line-height:16px;color:#8f8f8f;transform:scaleX(0.9449);transform-origin:0 0;-webkit-text-stroke:0;">Detect It Easy v3.03 [Windows 10 Version 2009](i386)</div>
<svg style="position:absolute;left:690px;top:5px" width="115" height="22"><path d="M6 10.5 H16" stroke="#999" stroke-width="1"/><rect x="51.5" y="5.5" width="9" height="9" stroke="#999" fill="none" stroke-width="1"/><path d="M97 5 L107 15 M107 5 L97 15" stroke="#999" stroke-width="1.1"/></svg>
<div class="t" style="left:103.30px;top:40.82px;font-size:11.5px;line-height:16px;color:#fff;transform:scaleX(0.8913);transform-origin:0 0;">File name</div>
<div style="left:104px;top:58px;width:619px;height:24px;border:1px solid #2a2a2a;border-radius:3px;box-sizing:border-box;"></div>
<div style="left:106px;top:59px;width:616px;height:20px;background:linear-gradient(#626262,#5a5a5a);border:1px solid #1c1c1c;box-sizing:border-box;"></div>
<div class="t" style="left:109.80px;top:61.82px;font-size:11.5px;line-height:16px;color:#fff;letter-spacing:-0.250px;">C:/studio/ShutdownRestore/testShutdownRestore/Debug/ShutdownRestore.dll</div>
<div class="btn" style="left:731px;top:49px;width:73px;height:20px;"></div>
<div class="t" style="left:763.92px;top:53.19px;font-size:11px;line-height:16px;color:#fff;">...</div>
<div class="t" style="left:103.40px;top:89.02px;font-size:11.5px;line-height:16px;color:#fff;transform:scaleX(0.9273);transform-origin:0 0;">File type</div>
<div class="t" style="left:229.20px;top:89.42px;font-size:11.5px;line-height:16px;color:#fff;letter-spacing:-0.177px;">Entry point</div>
<div class="t" style="left:498.40px;top:88.52px;font-size:11.5px;line-height:16px;color:#fff;transform:scaleX(0.9059);transform-origin:0 0;">Base address</div>
<div style="left:104px;top:106px;width:119px;height:27px;border:1px solid #2b2b2b;border-radius:3px;box-sizing:border-box;"></div>
<div style="left:107px;top:108px;width:112px;height:20px;background:linear-gradient(#434343,#383838);border:1px solid #575757;border-radius:3px;box-sizing:border-box;"></div>
<div class="t" style="left:110.30px;top:111.02px;font-size:11.5px;line-height:16px;color:#fff;transform:scaleX(0.8780);transform-origin:0 0;">PE32</div>
<svg style="position:absolute;left:205px;top:116px" width="10" height="5"><path d="M0 0 H8 L4 4 Z" fill="#c4c4c4"/></svg>
<div style="left:230px;top:106px;width:262px;height:27px;border:1px solid #2b2b2b;border-radius:3px;box-sizing:border-box;"></div>
<div style="left:232px;top:108px;width:140px;height:20px;background:linear-gradient(#636363,#5a5a5a);border:1px solid #1c1c1c;box-sizing:border-box;"></div>
<div class="t" style="left:274.00px;top:111.11px;font-size:11.8px;line-height:16px;color:#fff;font-weight:bold;transform:scaleX(1.0477);transform-origin:0 0;">10037c58</div>
<div class="btn" style="left:378px;top:107px;width:28px;height:20px;"></div>
<div class="t" style="left:389.79px;top:110.69px;font-size:11px;line-height:16px;color:#fff;">&gt;</div>
<div class="btn" style="left:414px;top:107px;width:73px;height:20px;"></div>
<div class="t" style="left:435.05px;top:110.69px;font-size:11px;line-height:16px;color:#fff;transform:scaleX(0.8972);transform-origin:0 0;">Disasm</div>
<div style="left:499px;top:106px;width:226px;height:27px;border:1px solid #2b2b2b;border-radius:3px;box-sizing:border-box;"></div>
<div style="left:501px;top:108px;width:140px;height:20px;background:linear-gradient(#636363,#5a5a5a);border:1px solid #1c1c1c;box-sizing:border-box;"></div>
<div class="t" style="left:542.50px;top:111.11px;font-size:11.8px;line-height:16px;color:#fff;font-weight:bold;transform:scaleX(1.0477);transform-origin:0 0;">10000000</div>
<div class="btn" style="left:647px;top:107px;width:73px;height:20px;"></div>
<div class="t" style="left:654.05px;top:110.69px;font-size:11px;line-height:16px;color:#fff;transform:scaleX(0.9490);transform-origin:0 0;">Memory map</div>
<div class="btn" style="left:731px;top:88px;width:73px;height:20px;"></div>
<div class="t" style="left:755.40px;top:91.69px;font-size:11px;line-height:16px;color:#fff;transform:scaleX(0.9123);transform-origin:0 0;">MIME</div>
<div class="btn" style="left:731px;top:117px;width:73px;height:20px;"></div>
<div class="t" style="left:756.70px;top:120.69px;font-size:11px;line-height:16px;color:#fff;transform:scaleX(0.9191);transform-origin:0 0;">Hash</div>
<div class="btn" style="left:731px;top:146px;width:73px;height:20px;"></div>
<div class="t" style="left:752.05px;top:149.69px;font-size:11px;line-height:16px;color:#fff;letter-spacing:-0.222px;">Strings</div>
<div class="btn" style="left:731px;top:175px;width:73px;height:20px;"></div>
<div class="t" style="left:768.50px;top:178.69px;font-size:11px;line-height:16px;color:#fff;"></div>
<div class="btn" style="left:103px;top:139px;width:73px;height:21px;"></div>
<div class="t" style="left:134.60px;top:142.69px;font-size:11px;line-height:16px;color:#fff;transform:scaleX(0.8041);transform-origin:0 0;">PE</div>
<div class="btn" style="left:245px;top:139px;width:73px;height:21px;"></div>
<div class="t" style="left:266.00px;top:142.69px;font-size:11px;line-height:16px;color:#fff;letter-spacing:0.242px;">Export</div>
<div class="btn" style="left:326px;top:139px;width:73px;height:21px;"></div>
<div class="t" style="left:347.40px;top:142.69px;font-size:11px;line-height:16px;color:#fff;letter-spacing:0.206px;">Import</div>
<div class="btn" style="left:407px;top:139px;width:72px;height:21px;"></div>
<div class="t" style="left:418.50px;top:142.69px;font-size:11px;line-height:16px;color:#fff;letter-spacing:-0.197px;">Resources</div>
<div style="left:488px;top:139px;width:75px;height:23px;background:linear-gradient(#9a9a9a,#868686);border-radius:3px;box-shadow:inset 0 0 0 1px #a6a6a6;"></div>
<div class="t" style="left:513.60px;top:142.69px;font-size:11px;line-height:16px;color:#5c5c5c;transform:scaleX(0.9499);transform-origin:0 0;">.NET</div>
<div style="left:569px;top:139px;width:75px;height:23px;background:linear-gradient(#9a9a9a,#868686);border-radius:3px;box-shadow:inset 0 0 0 1px #a6a6a6;"></div>
<div class="t" style="left:597.10px;top:142.69px;font-size:11px;line-height:16px;color:#5c5c5c;transform:scaleX(0.9319);transform-origin:0 0;">TLS</div>
<div style="left:650px;top:139px;width:75px;height:23px;background:linear-gradient(#9a9a9a,#868686);border-radius:3px;box-shadow:inset 0 0 0 1px #a6a6a6;"></div>
<div class="t" style="left:669.15px;top:142.69px;font-size:11px;line-height:16px;color:#5c5c5c;letter-spacing:-0.199px;">Overlay</div>
<div class="t" style="left:103.40px;top:169.02px;font-size:11.5px;line-height:16px;color:#fff;transform:scaleX(0.8978);transform-origin:0 0;">Sections</div>
<div class="t" style="left:231.50px;top:169.02px;font-size:11.5px;line-height:16px;color:#fff;transform:scaleX(0.9212);transform-origin:0 0;">Time date stamp</div>
<div class="t" style="left:393.60px;top:169.02px;font-size:11.5px;line-height:16px;color:#fff;transform:scaleX(0.8956);transform-origin:0 0;">Size of image</div>
<div class="t" style="left:563.70px;top:169.02px;font-size:11.5px;line-height:16px;color:#fff;transform:scaleX(0.8969);transform-origin:0 0;">Resources</div>
<div style="left:236px;top:133px;width:91px;height:38px;border:5px solid #ed1c24;box-sizing:border-box;"></div>
<div style="left:7px;top:178px;width:906px;height:500px;background:#333;box-shadow:inset 1px 0 0 #474747, inset -1px 0 0 #474747;"></div>
<div style="left:7px;top:178px;width:906px;height:31px;border:1px solid #8a8a8a;border-bottom:0;box-sizing:border-box;"></div>
<div style="left:8px;top:179px;width:904px;height:30px;background:#fff;"></div>
<svg style="position:absolute;left:16px;top:185px" width="16" height="16"><defs><linearGradient id="dg16" x1="0" y1="0" x2="1" y2="1"><stop offset="0" stop-color="#f5d030"/><stop offset=".5" stop-color="#eca425"/><stop offset="1" stop-color="#d8681a"/></linearGradient></defs><rect width="16" height="16" fill="url(#dg16)"/><path fill-rule="evenodd" fill="#080808" d="M1.8 3.2 H5.6 Q10.2 3.2 10.2 8.1 Q10.2 13.1 5.6 13.1 H1.8 Z M4.4 5.6 H5.4 Q7.5 5.6 7.5 8.1 Q7.5 10.7 5.4 10.7 H4.4 Z"/><ellipse cx="11.6" cy="10.8" rx="2.6" ry="2.8" fill="#080808"/><rect x="10.2" y="9.3" width="2.8" height="0.9" fill="#e49a30"/><rect x="10.6" y="11.5" width="3.4" height="0.8" fill="#e49a30"/><circle cx="11.6" cy="3.4" r="1.4" fill="#080808"/></svg>
<div class="t" style="left:37.60px;top:185.84px;font-size:12px;line-height:16px;color:#000;transform:scaleX(0.8121);transform-origin:0 0;">PE</div>
<svg style="position:absolute;left:785px;top:183px" width="120" height="22"><path d="M8 10.5 H18" stroke="#000" stroke-width="1"/><rect x="53.5" y="5.5" width="9" height="9" stroke="#000" fill="none" stroke-width="1"/><path d="M99 5 L109 15 M109 5 L99 15" stroke="#000" stroke-width="1.1"/></svg>
<div class="btn" style="left:19px;top:220px;width:73px;height:20px;"></div>
<div class="t" style="left:39.95px;top:224.09px;font-size:11px;line-height:16px;color:#fff;transform:scaleX(0.9496);transform-origin:0 0;">Reload</div>
<div style="left:101px;top:222px;width:20px;height:18px;border:1px solid #5a5a5a;border-radius:3px;box-sizing:border-box;background:#3d3d3d;box-shadow:0 0 0 1px #2a2a2a;"></div>
<div style="left:129px;top:222px;width:20px;height:18px;border:1px solid #5a5a5a;border-radius:3px;box-sizing:border-box;background:#3d3d3d;box-shadow:0 0 0 1px #2a2a2a;"></div>
<div class="btn" style="left:349px;top:220px;width:73px;height:20px;"></div>
<div class="t" style="left:377.25px;top:224.09px;font-size:11px;line-height:16px;color:#fff;transform:scaleX(0.9458);transform-origin:0 0;">Hex</div>
<div class="btn" style="left:430px;top:220px;width:73px;height:20px;"></div>
<div class="t" style="left:451.05px;top:224.09px;font-size:11px;line-height:16px;color:#fff;transform:scaleX(0.8972);transform-origin:0 0;">Disasm</div>
<div class="btn" style="left:511px;top:220px;width:73px;height:20px;"></div>
<div class="t" style="left:531.90px;top:224.09px;font-size:11px;line-height:16px;color:#fff;letter-spacing:-0.172px;">Strings</div>
<div class="btn" style="left:592px;top:220px;width:73px;height:20px;"></div>
<div class="t" style="left:599.25px;top:224.09px;font-size:11px;line-height:16px;color:#fff;transform:scaleX(0.9427);transform-origin:0 0;">Memory map</div>
<div class="btn" style="left:673px;top:220px;width:73px;height:20px;"></div>
<div class="t" style="left:691.60px;top:224.09px;font-size:11px;line-height:16px;color:#fff;letter-spacing:-0.018px;">Entropy</div>
<div class="btn" style="left:754px;top:220px;width:73px;height:20px;"></div>
<div class="t" style="left:758.45px;top:224.09px;font-size:11px;line-height:16px;color:#fff;letter-spacing:-0.229px;">Heuristic scan</div>
<div style="left:835px;top:224px;width:14px;height:14px;background:#d98220;border:1px solid #b0b0b0;box-sizing:border-box;"></div>
<div class="t" style="left:854.30px;top:223.62px;font-size:11.5px;line-height:16px;color:#fff;transform:scaleX(0.9344);transform-origin:0 0;">Readonly</div>
<div style="left:19px;top:249px;width:250px;height:418px;background:#646464;"></div>
<div style="left:20px;top:460px;width:248px;height:15px;background:#f0f0f0;"></div>
<div class="t" style="left:43.30px;top:249.84px;font-size:12px;line-height:16px;color:#fff;transform:scaleX(0.9279);transform-origin:0 0;">Hex</div>
<div class="t" style="left:43.30px;top:264.84px;font-size:12px;line-height:16px;color:#fff;transform:scaleX(0.9375);transform-origin:0 0;">Disasm</div>
<div class="t" style="left:43.30px;top:279.84px;font-size:12px;line-height:16px;color:#fff;letter-spacing:-0.404px;">Hash</div>
<div class="t" style="left:43.30px;top:294.84px;font-size:12px;line-height:16px;color:#fff;letter-spacing:-0.208px;">Strings</div>
<div class="t" style="left:43.30px;top:309.84px;font-size:12px;line-height:16px;color:#fff;letter-spacing:-0.285px;">Signatures</div>
<div class="t" style="left:43.30px;top:324.84px;font-size:12px;line-height:16px;color:#fff;letter-spacing:0.155px;">Memory map</div>
<div class="t" style="left:43.30px;top:339.84px;font-size:12px;line-height:16px;color:#fff;letter-spacing:-0.109px;">Entropy</div>
<div class="t" style="left:43.30px;top:354.84px;font-size:12px;line-height:16px;color:#fff;letter-spacing:-0.112px;">Heuristic scan</div>
<div class="t" style="left:43.30px;top:369.84px;font-size:12px;line-height:16px;color:#fff;transform:scaleX(0.8810);transform-origin:0 0;">IMAGE_DOS_HEADER</div>
<div class="t" style="left:43.30px;top:384.84px;font-size:12px;line-height:16px;color:#fff;transform:scaleX(0.8784);transform-origin:0 0;">IMAGE_NT_HEADERS</div>
<svg style="position:absolute;left:26px;top:390px" width="9" height="5"><path d="M0 0 H8 L4 4.5 Z" fill="#c8c8c8"/></svg>
<div class="t" style="left:63.30px;top:399.84px;font-size:12px;line-height:16px;color:#fff;transform:scaleX(0.8652);transform-origin:0 0;">IMAGE_FILE_HEADER</div>
<div class="t" style="left:63.30px;top:414.84px;font-size:12px;line-height:16px;color:#fff;transform:scaleX(0.8998);transform-origin:0 0;">IMAGE_OPTIONAL_HEADER</div>
<svg style="position:absolute;left:46px;top:420px" width="9" height="5"><path d="M0 0 H8 L4 4.5 Z" fill="#c8c8c8"/></svg>
<div class="t" style="left:83.30px;top:429.84px;font-size:12px;line-height:16px;color:#fff;transform:scaleX(0.8504);transform-origin:0 0;">IMAGE_DIRECTORY_ENTRIES</div>
<div class="t" style="left:43.30px;top:444.84px;font-size:12px;line-height:16px;color:#fff;transform:scaleX(0.9539);transform-origin:0 0;">Sections</div>
<div class="t" style="left:43.30px;top:459.84px;font-size:12px;line-height:16px;color:#000;letter-spacing:-0.256px;">Export</div>
<div class="t" style="left:43.30px;top:474.84px;font-size:12px;line-height:16px;color:#fff;transform:scaleX(1.0587);transform-origin:0 0;">Import</div>
<div class="t" style="left:43.30px;top:489.84px;font-size:12px;line-height:16px;color:#fff;transform:scaleX(0.9241);transform-origin:0 0;">Resources</div>
<svg style="position:absolute;left:26px;top:495px" width="9" height="5"><path d="M0 0 H8 L4 4.5 Z" fill="#c8c8c8"/></svg>
<div class="t" style="left:63.30px;top:504.84px;font-size:12px;line-height:16px;color:#fff;letter-spacing:0.007px;">Manifest</div>
<div class="t" style="left:43.30px;top:519.84px;font-size:12px;line-height:16px;color:#fff;transform:scaleX(0.9242);transform-origin:0 0;">Relocs</div>
<div class="t" style="left:43.30px;top:534.84px;font-size:12px;line-height:16px;color:#fff;letter-spacing:-0.165px;">Debug</div>
<div class="t" style="left:43.30px;top:549.84px;font-size:12px;line-height:16px;color:#fff;letter-spacing:0.105px;">Load config</div>
<div style="left:271px;top:451px;width:2px;height:2px;background:#8a8a8a;"></div>
<div style="left:271px;top:454px;width:2px;height:2px;background:#8a8a8a;"></div>
<div style="left:271px;top:457px;width:2px;height:2px;background:#8a8a8a;"></div>
<div style="left:271px;top:460px;width:2px;height:2px;background:#8a8a8a;"></div>
<div style="left:271px;top:463px;width:2px;height:2px;background:#8a8a8a;"></div>
<div style="left:274px;top:249px;width:627px;height:194px;background:#646464;"></div>
<div style="left:275px;top:250px;width:618px;height:21px;background:linear-gradient(#6b6b6b 0px,#5e5e5e 1px,#464646 12px,#5a5a5a 19px,#6c6c6c 20px);"></div>
<div style="left:499px;top:250px;width:2px;height:21px;background:linear-gradient(#6b6b6b,#555 50%,#6a6a6a);opacity:.8;"></div>
<div style="left:534px;top:250px;width:2px;height:21px;background:linear-gradient(#6b6b6b,#555 50%,#6a6a6a);opacity:.8;"></div>
<div style="left:607px;top:250px;width:2px;height:21px;background:linear-gradient(#6b6b6b,#555 50%,#6a6a6a);opacity:.8;"></div>
<div style="left:678px;top:250px;width:2px;height:21px;background:linear-gradient(#6b6b6b,#555 50%,#6a6a6a);opacity:.8;"></div>
<div class="t" style="left:372.00px;top:253.34px;font-size:12px;line-height:16px;color:#fff;letter-spacing:-0.003px;">Name</div>
<div class="t" style="left:503.30px;top:253.34px;font-size:12px;line-height:16px;color:#fff;letter-spacing:-0.218px;">Offset</div>
<div class="t" style="left:561.60px;top:253.34px;font-size:12px;line-height:16px;color:#fff;transform:scaleX(0.9072);transform-origin:0 0;">Type</div>
<div class="t" style="left:631.20px;top:253.34px;font-size:12px;line-height:16px;color:#fff;transform:scaleX(0.9463);transform-origin:0 0;">Value</div>
<div class="t" style="left:277.50px;top:273.64px;font-size:12px;line-height:16px;color:#fff;letter-spacing:-0.225px;">Characteristics</div>
<div class="t" style="left:502.00px;top:273.64px;font-size:12px;line-height:16px;color:#fff;transform:scaleX(0.9104);transform-origin:0 0;">0000</div>
<div class="t" style="left:538.20px;top:273.64px;font-size:12px;line-height:16px;color:#fff;transform:scaleX(0.9109);transform-origin:0 0;">DWORD</div>
<div style="left:607px;top:271px;width:71px;height:20px;border:1px solid #1c1c1c;box-sizing:border-box;background:#5f5f5f;"></div>
<div class="t" style="left:617.40px;top:273.64px;font-size:12px;line-height:16px;color:#fff;transform:scaleX(0.9029);transform-origin:0 0;">00000000</div>
<div class="t" style="left:277.50px;top:294.64px;font-size:12px;line-height:16px;color:#fff;letter-spacing:-0.279px;">TimeDateStamp</div>
<div class="t" style="left:502.00px;top:294.64px;font-size:12px;line-height:16px;color:#fff;transform:scaleX(0.9104);transform-origin:0 0;">0004</div>
<div class="t" style="left:538.20px;top:294.64px;font-size:12px;line-height:16px;color:#fff;transform:scaleX(0.9109);transform-origin:0 0;">DWORD</div>
<div style="left:607px;top:292px;width:71px;height:20px;border:1px solid #1c1c1c;box-sizing:border-box;background:#5f5f5f;"></div>
<div class="t" style="left:614.00px;top:295.18px;font-size:11.6px;line-height:16px;color:#fff;font-weight:bold;transform:scaleX(1.0852);transform-origin:0 0;">624c1867</div>
<div class="t" style="left:277.50px;top:315.64px;font-size:12px;line-height:16px;color:#fff;letter-spacing:-0.139px;">MajorVersion</div>
<div class="t" style="left:502.00px;top:315.64px;font-size:12px;line-height:16px;color:#fff;transform:scaleX(0.9104);transform-origin:0 0;">0008</div>
<div class="t" style="left:538.20px;top:315.64px;font-size:12px;line-height:16px;color:#fff;transform:scaleX(0.8949);transform-origin:0 0;">WORD</div>
<div style="left:607px;top:313px;width:71px;height:20px;border:1px solid #1c1c1c;box-sizing:border-box;background:#5f5f5f;"></div>
<div class="t" style="left:629.35px;top:315.64px;font-size:12px;line-height:16px;color:#fff;transform:scaleX(0.9104);transform-origin:0 0;">0000</div>
<div class="t" style="left:277.50px;top:336.64px;font-size:12px;line-height:16px;color:#fff;letter-spacing:-0.075px;">MinorVersion</div>
<div class="t" style="left:502.00px;top:336.64px;font-size:12px;line-height:16px;color:#fff;transform:scaleX(0.9104);transform-origin:0 0;">000a</div>
<div class="t" style="left:538.20px;top:336.64px;font-size:12px;line-height:16px;color:#fff;transform:scaleX(0.8949);transform-origin:0 0;">WORD</div>
<div style="left:607px;top:334px;width:71px;height:20px;border:1px solid #1c1c1c;box-sizing:border-box;background:#5f5f5f;"></div>
<div class="t" style="left:629.35px;top:336.64px;font-size:12px;line-height:16px;color:#fff;transform:scaleX(0.9104);transform-origin:0 0;">0000</div>
<div class="t" style="left:277.50px;top:357.64px;font-size:12px;line-height:16px;color:#fff;letter-spacing:-0.036px;">Name</div>
<div class="t" style="left:502.00px;top:357.64px;font-size:12px;line-height:16px;color:#fff;transform:scaleX(0.9339);transform-origin:0 0;">000c</div>
<div class="t" style="left:538.20px;top:357.64px;font-size:12px;line-height:16px;color:#fff;transform:scaleX(0.9109);transform-origin:0 0;">DWORD</div>
<div style="left:607px;top:355px;width:71px;height:20px;border:1px solid #1c1c1c;box-sizing:border-box;background:#5f5f5f;"></div>
<div class="t" style="left:614.00px;top:358.18px;font-size:11.6px;line-height:16px;color:#fff;font-weight:bold;transform:scaleX(1.1136);transform-origin:0 0;">000bfd82</div>
<div class="t" style="left:277.50px;top:378.64px;font-size:12px;line-height:16px;color:#fff;transform:scaleX(0.8629);transform-origin:0 0;">Base</div>
<div class="t" style="left:502.00px;top:378.64px;font-size:12px;line-height:16px;color:#fff;transform:scaleX(0.9104);transform-origin:0 0;">0010</div>
<div class="t" style="left:538.20px;top:378.64px;font-size:12px;line-height:16px;color:#fff;transform:scaleX(0.9109);transform-origin:0 0;">DWORD</div>
<div style="left:607px;top:376px;width:71px;height:20px;border:1px solid #1c1c1c;box-sizing:border-box;background:#5f5f5f;"></div>
<div class="t" style="left:614.00px;top:379.18px;font-size:11.6px;line-height:16px;color:#fff;font-weight:bold;transform:scaleX(1.0852);transform-origin:0 0;">00000001</div>
<div class="t" style="left:277.50px;top:399.64px;font-size:12px;line-height:16px;color:#fff;letter-spacing:0.077px;">NumberOfFunctions</div>
<div class="t" style="left:502.00px;top:399.64px;font-size:12px;line-height:16px;color:#fff;transform:scaleX(0.9104);transform-origin:0 0;">0014</div>
<div class="t" style="left:538.20px;top:399.64px;font-size:12px;line-height:16px;color:#fff;transform:scaleX(0.9109);transform-origin:0 0;">DWORD</div>
<div style="left:607px;top:397px;width:71px;height:20px;border:1px solid #1c1c1c;box-sizing:border-box;background:#5f5f5f;"></div>
<div class="t" style="left:614.00px;top:400.18px;font-size:11.6px;line-height:16px;color:#fff;font-weight:bold;transform:scaleX(1.0852);transform-origin:0 0;">00000001</div>
<div class="t" style="left:277.50px;top:420.64px;font-size:12px;line-height:16px;color:#fff;letter-spacing:0.029px;">NumberOfNames</div>
<div class="t" style="left:502.00px;top:420.64px;font-size:12px;line-height:16px;color:#fff;transform:scaleX(0.9104);transform-origin:0 0;">0018</div>
<div class="t" style="left:538.20px;top:420.64px;font-size:12px;line-height:16px;color:#fff;transform:scaleX(0.9109);transform-origin:0 0;">DWORD</div>
<div style="left:607px;top:418px;width:71px;height:20px;border:1px solid #1c1c1c;box-sizing:border-box;background:#5f5f5f;"></div>
<div class="t" style="left:614.00px;top:421.18px;font-size:11.6px;line-height:16px;color:#fff;font-weight:bold;transform:scaleX(1.0852);transform-origin:0 0;">00000001</div>
<div style="left:679px;top:293px;width:214px;height:18px;background:#303030;border:1px solid #232323;border-right:0;border-radius:3px 0 0 3px;box-sizing:border-box;"></div>
<div class="t" style="left:684.00px;top:294.44px;font-size:12px;line-height:16px;color:#fff;transform:scaleX(0.9245);transform-origin:0 0;">2022-04-05 19:22:31</div>
<div style="left:889px;top:294px;width:4px;height:16px;background:#3c3c3c;border-left:1px solid #262626;box-sizing:border-box;"></div>
<div style="left:679px;top:355px;width:214px;height:19px;background:linear-gradient(#4e4e4e,#424242);border-top:1px solid #eee;border-left:1px solid #eee;border-bottom:1px solid #a0a0a0;box-sizing:border-box;"></div>
<div class="t" style="left:779.10px;top:357.84px;font-size:12px;line-height:16px;color:#fff;transform:scaleX(0.9279);transform-origin:0 0;">Hex</div>
<div style="left:893px;top:249px;width:8px;height:194px;background:#5a5a5a;"></div>
<div style="left:894px;top:250px;width:5px;height:185px;background:linear-gradient(90deg,#2c2c2c,#3a3a3a);"></div>
<div class="sbtn" style="left:894px;top:251px;width:5px;height:13px;"></div>
<div class="sbh" style="left:894px;top:267px;width:5px;height:95px;"></div>
<div class="sbtn" style="left:894px;top:420px;width:5px;height:14px;"></div>
<div style="left:895px;top:256px;width:1px;height:1px;background:#fff;border:1px solid #000;"></div>
<div style="left:895px;top:426px;width:1px;height:1px;background:#fff;border:1px solid #000;"></div>
<div style="left:274px;top:435px;width:627px;height:8px;background:#5a5a5a;"></div>
<div style="left:275px;top:436px;width:602px;height:5px;background:linear-gradient(#2c2c2c,#3a3a3a);"></div>
<div class="sbtn" style="left:275px;top:436px;width:14px;height:5px;"></div>
<div class="sbh" style="left:291px;top:436px;width:486px;height:5px;"></div>
<div class="sbtn" style="left:878px;top:436px;width:14px;height:5px;"></div>
<div style="left:281px;top:437px;width:1px;height:1px;background:#fff;border:1px solid #000;"></div>
<div style="left:884px;top:437px;width:1px;height:1px;background:#fff;border:1px solid #000;"></div>
<div style="left:580px;top:444px;width:2px;height:2px;background:#8a8a8a;"></div>
<div style="left:583px;top:444px;width:2px;height:2px;background:#8a8a8a;"></div>
<div style="left:586px;top:444px;width:2px;height:2px;background:#8a8a8a;"></div>
<div style="left:589px;top:444px;width:2px;height:2px;background:#8a8a8a;"></div>
<div style="left:592px;top:444px;width:2px;height:2px;background:#8a8a8a;"></div>
<div style="left:595px;top:444px;width:2px;height:2px;background:#8a8a8a;"></div>
<div style="left:829px;top:450px;width:14px;height:14px;background:#5a5a5a;border:1px solid #a8a8a8;box-sizing:border-box;"></div>
<div class="t" style="left:848.40px;top:449.74px;font-size:12px;line-height:16px;color:#fff;transform:scaleX(0.8754);transform-origin:0 0;">Show valid</div>
<div style="left:273px;top:473px;width:628px;height:194px;background:#646464;"></div>
<div style="left:274px;top:474px;width:627px;height:21px;background:linear-gradient(#6b6b6b 0px,#5e5e5e 1px,#464646 12px,#5a5a5a 19px,#6c6c6c 20px);"></div>
<div style="left:308px;top:474px;width:2px;height:21px;background:linear-gradient(#6b6b6b,#555 50%,#6a6a6a);opacity:.8;"></div>
<div style="left:381px;top:474px;width:2px;height:21px;background:linear-gradient(#6b6b6b,#555 50%,#6a6a6a);opacity:.8;"></div>
<div style="left:453px;top:474px;width:2px;height:21px;background:linear-gradient(#6b6b6b,#555 50%,#6a6a6a);opacity:.8;"></div>
<div style="left:275px;top:474px;width:33px;height:21px;overflow:hidden;">
<div class="t" style="left:-2.7px;top:3px;font-size:12px;line-height:16px;color:#fff;font-weight:bold;transform:scaleX(.93);transform-origin:0 0;">Ordinal</div></div>
<div class="t" style="left:336.80px;top:476.97px;font-size:12.5px;line-height:16px;color:#fff;font-weight:bold;transform:scaleX(0.9351);transform-origin:0 0;">RVA</div>
<div class="t" style="left:403.25px;top:476.97px;font-size:12.5px;line-height:16px;color:#fff;font-weight:bold;transform:scaleX(0.9546);transform-origin:0 0;">Name</div>
<div style="left:274px;top:495px;width:626px;height:19px;background:#f0f0f0;"></div>
<div style="left:309px;top:495px;width:1px;height:19px;background:#a0a0a0;"></div>
<div style="left:381px;top:495px;width:1px;height:19px;background:#a0a0a0;"></div>
<div style="left:453px;top:495px;width:1px;height:19px;background:#a0a0a0;"></div>
<div class="t" style="left:278.20px;top:497.14px;font-size:12px;line-height:16px;color:#000;transform:scaleX(0.8130);transform-origin:0 0;">0001</div>
<div class="t" style="left:313.00px;top:497.14px;font-size:12px;line-height:16px;color:#000;transform:scaleX(0.8954);transform-origin:0 0;">0003792e</div>
<div class="t" style="left:385.30px;top:497.14px;font-size:12px;line-height:16px;color:#000;transform:scaleX(0.9511);transform-origin:0 0;">000bfd96</div>
<div class="t" style="left:457.00px;top:497.14px;font-size:12px;line-height:16px;color:#000;letter-spacing:-0.156px;">ShutdownRestore</div>
<div style="left:273px;top:659px;width:628px;height:8px;background:#5a5a5a;"></div>
<div style="left:275px;top:660px;width:608px;height:5px;background:linear-gradient(#2c2c2c,#3a3a3a);"></div>
<div class="sbtn" style="left:275px;top:660px;width:14px;height:5px;"></div>
<div class="sbh" style="left:291px;top:660px;width:444px;height:5px;"></div>
<div class="sbtn" style="left:885px;top:660px;width:14px;height:5px;"></div>
<div style="left:281px;top:661px;width:1px;height:1px;background:#fff;border:1px solid #000;"></div>
<div style="left:891px;top:661px;width:1px;height:1px;background:#fff;border:1px solid #000;"></div>
<div style="left:261px;top:465px;width:334px;height:61px;border:5px solid #ed1c24;box-sizing:border-box;"></div>
</body></html>
